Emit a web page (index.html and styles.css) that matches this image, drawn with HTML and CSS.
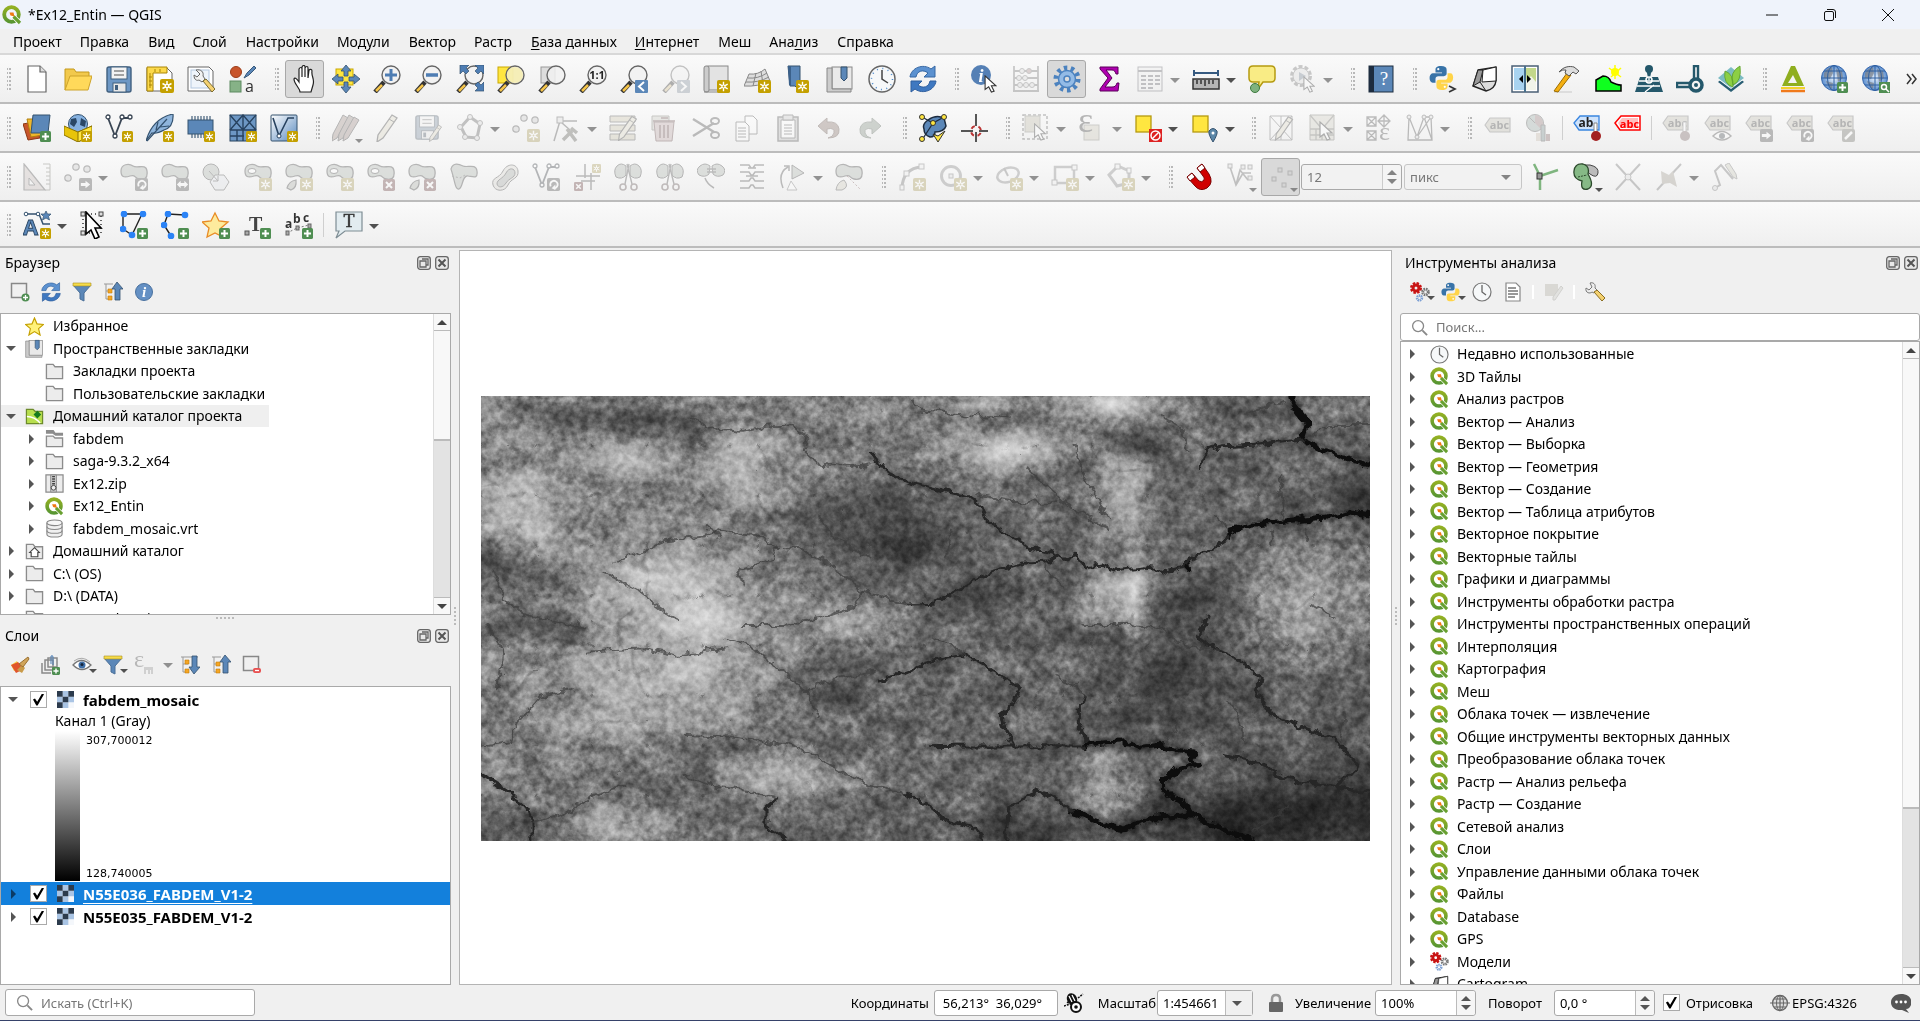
FILE: index.html
```html
<!DOCTYPE html>
<html lang="ru">
<head>
<meta charset="utf-8">
<title>*Ex12_Entin — QGIS</title>
<link rel="stylesheet" href="styles.css">
</head>
<body>
<svg class="grads" aria-hidden="true">
<defs>
<linearGradient id="gq" x1="0" y1="0" x2="0" y2="1"><stop offset="0" stop-color="#93b023"/><stop offset="1" stop-color="#589632"/></linearGradient>
<linearGradient id="gblue" x1="0" y1="0" x2="1" y2="1"><stop offset="0" stop-color="#fff"/><stop offset="1" stop-color="#5b8bbf"/></linearGradient>
<radialGradient id="gglobe"><stop offset="0" stop-color="#e8f2fc"/><stop offset="1" stop-color="#5c8fd0"/></radialGradient>
</defs>
</svg>
<svg class="defs" aria-hidden="true">
<symbol id="b-new" viewBox="0 0 14 14"><rect width="14" height="14" rx="2" fill="#c4a000"/><path d="M7 2v10M2.500 4.500l9 5M11.500 4.500l-9 5" stroke="#fff" stroke-width="1.500"/><circle cx="7" cy="7" r="2.200" fill="#fff"/><circle cx="7" cy="7" r="1" fill="#c4a000"/></symbol>
<symbol id="b-plus" viewBox="0 0 14 14"><rect width="14" height="14" rx="2" fill="#4f8e52"/><path d="M7 2.500v9M2.500 7h9" stroke="#fff" stroke-width="2.500"/></symbol>
<symbol id="b-x" viewBox="0 0 14 14"><rect width="14" height="14" rx="2" fill="#a03c3c"/><path d="M3.500 3.500l7 7M10.500 3.500l-7 7" stroke="#fff" stroke-width="2.400"/></symbol>
<symbol id="b-right" viewBox="0 0 14 14"><rect width="14" height="14" rx="2" fill="#555"/><path d="M2 5.500h5V3l5 4-5 4V8.500H2z" fill="#fff"/></symbol>
<symbol id="b-both" viewBox="0 0 14 14"><rect width="14" height="14" rx="2" fill="#555"/><path d="M1 7l4-4v2.500h4V3l4 4-4 4V8.500H5V11z" fill="#fff"/></symbol>
<symbol id="b-rot" viewBox="0 0 14 14"><rect width="14" height="14" rx="2" fill="#555"/><path d="M4 9a4 4 0 1 1 4 2" fill="none" stroke="#fff" stroke-width="2"/><path d="M9 7v6l-4-2z" fill="#fff"/></symbol>
<symbol id="cur" viewBox="0 0 14 20"><path d="M1 1v15l4-3 3 6 3-1-3-6h5z" fill="#fff" stroke="#333" stroke-width="1.200"/></symbol>
<symbol id="q" viewBox="0 0 20 20"><circle cx="9.500" cy="9.500" r="7.300" fill="none" stroke="url(#gq)" stroke-width="3.800"/><path d="M9.500 9.500l7.500 7.500" stroke="#fff" stroke-width="4.600"/><path d="M11.500 11.500l6.500 6.500" stroke="#68a030" stroke-width="3.200"/><path d="M7.500 7.500h4l1 4-4-1z" fill="#ee7913"/></symbol>

<symbol id="new" viewBox="0 0 28 28"><path d="M5 1h12l6 6v20H5z" fill="#fff" stroke="#666" stroke-width="1.200"/><path d="M17 1v6h6" fill="#ddd" stroke="#666" stroke-width="1.200"/></symbol>
<symbol id="open" viewBox="0 0 28 28"><path d="M1 25V4h9l2 3h13v5" fill="#f2c94c" stroke="#c49a1d"/><path d="M1 25l5-14h22l-4 14z" fill="#ffd95a" stroke="#cda32a"/></symbol>
<symbol id="save" viewBox="0 0 28 28"><rect x="2" y="2" width="24" height="25" rx="2" fill="#6d97c4" stroke="#41607f" stroke-width="1.400"/><rect x="6" y="2" width="16" height="12" fill="#f3f3f3" stroke="#41607f"/><path d="M9 6h10M9 10h10" stroke="#888" stroke-width="1.300"/><rect x="8" y="18" width="13" height="9" fill="#e8e8e8" stroke="#41607f"/><rect x="10" y="20" width="3" height="5" fill="#41607f"/></symbol>
<symbol id="layout" viewBox="0 0 28 28"><path d="M1 3h20l5 5v18H1z" fill="#fff" stroke="#666"/><path d="M1 2h20v6H7v18H1z" fill="#fcd94b" stroke="#a98506"/><path d="M4 8v15M9 4v3M14 4v3M3 12h3M3 16h3M3 20h3" stroke="#a98506"/><use href="#b-new" x="14" y="14" width="14" height="14"/></symbol>
<symbol id="layman" viewBox="0 0 28 28"><path d="M1 2h21l4 4v20H1z" fill="#fff" stroke="#666"/><rect x="4" y="5" width="18" height="18" fill="#eef4fb" stroke="#b4c8e0"/><path d="M9 5l4 4-3 3-3-2c0 5 3 6 5 5l3 2 3-3-2-3c1-4-2-7-7-6z" fill="#f2f2f2" stroke="#666"/><path d="M16 16l9 11 3-3-9-10z" fill="#f4d170" stroke="#7a6a30"/></symbol>
<symbol id="style" viewBox="0 0 28 28"><circle cx="7" cy="7" r="5.500" fill="#c8552b" stroke="#9c3c18"/><path d="M15 13l3-5 7-7 2 2-7 7z" fill="#5b87b8" stroke="#38587a"/><rect x="1" y="16" width="11" height="11" fill="#86b287" stroke="#5d8a60"/><text x="16" y="27" font-size="16" fill="#333" font-family="Open Sans">a</text></symbol>
<symbol id="hand" viewBox="0 0 28 28"><path d="M9 27c0-4-6-8-6-13 1-2 3 0 5 3V4c1-2 3-2 3 0v8V2c1-2 3-2 3 0v10V3c1-2 3-2 3 0v10l1-8c1-1 3-1 3 1-1 5 3 8 1 14l-2 7z" fill="#fff" stroke="#222" stroke-width="1.200"/></symbol>
<symbol id="pansel" viewBox="0 0 28 28"><rect x="4" y="4" width="17" height="16" fill="#ffe640" stroke="#c9a800"/><path d="M14 0l5 6h-3v5h-4V6H9zM14 28l5-6h-3v-5h-4v5H9zM0 14l6-5v3h5v4H6v3zM28 14l-6-5v3h-5v4h5v3z" fill="#5b87b8" stroke="#34526f" stroke-width=".8"/></symbol>
<symbol id="mag" viewBox="0 0 28 28"><path d="M11 17L2 27" stroke="#333" stroke-width="4.500"/><path d="M9 20l-6 6" stroke="#f4c44a" stroke-width="2.500"/><circle cx="18" cy="10" r="9" fill="#f1f1f1" fill-opacity=".85" stroke="#666" stroke-width="1.400"/></symbol>
<symbol id="zin" viewBox="0 0 28 28"><use href="#mag"/><path d="M18 4v12M12 10h12" stroke="#4e7db3" stroke-width="3"/></symbol>
<symbol id="zout" viewBox="0 0 28 28"><use href="#mag"/><path d="M12 10h12" stroke="#4e7db3" stroke-width="3.500"/></symbol>
<symbol id="zfull" viewBox="0 0 28 28"><use href="#mag"/><path d="M4 0h9l-3 3 3 3-3 3-3-3-3 3zM28 0v9l-3-3-3 3-3-3 3-3-3-3zM28 26h-9l3-3-3-3 3-3 3 3 3-3z" fill="#4e7db3" stroke="#34526f" stroke-width=".7"/></symbol>
<symbol id="zsel" viewBox="0 0 28 28"><rect x="1" y="2" width="15" height="16" fill="#ffe640" stroke="#c9a800"/><use href="#mag"/><circle cx="18" cy="10" r="8" fill="#f6eda0" fill-opacity=".7"/></symbol>
<symbol id="zlay" viewBox="0 0 28 28"><rect x="3" y="2" width="14" height="16" fill="#ddd" stroke="#999"/><use href="#mag"/></symbol>
<symbol id="z11" viewBox="0 0 28 28"><use href="#mag"/><text x="18" y="14" text-anchor="middle" font-size="11" font-weight="700" fill="#222" font-family="Open Sans">1:1</text></symbol>
<symbol id="zlast" viewBox="0 0 28 28"><use href="#mag"/><rect x="15" y="15" width="13" height="13" rx="1" fill="#5b87b8"/><path d="M24 17l-5 4.500 5 4.500" fill="none" stroke="#fff" stroke-width="2"/></symbol>
<symbol id="znext" viewBox="0 0 28 28"><use href="#mag"/><rect x="15" y="15" width="13" height="13" rx="1" fill="#7b98b8"/><path d="M19 17l5 4.500-5 4.500" fill="none" stroke="#fff" stroke-width="2"/></symbol>
<symbol id="mapv" viewBox="0 0 28 28"><rect x="5" y="1" width="20" height="24" fill="#e3e3e3" stroke="#888"/><rect x="1" y="1" width="5" height="26" rx="2" fill="#ccc" stroke="#888"/><path d="M1 27h20v-3" fill="none" stroke="#888"/><use href="#b-new" x="14" y="15" width="13" height="13"/></symbol>
<symbol id="map3d" viewBox="0 0 28 28"><path d="M5 9q9 1 16-5l5 12q-12 6-26 5z" fill="#ddd" stroke="#888"/><path d="M4 13q10 1 19-5M2 17q12 1 23-5M12 8l-3 13M17 6l2 13" fill="none" stroke="#888"/><use href="#b-new" x="14" y="15" width="13" height="13"/></symbol>
<symbol id="bmk" viewBox="0 0 28 28"><path d="M3 1h12v25l-5-5H5z" fill="#5b87b8" stroke="#34526f"/><path d="M3 1h3v19H4z" fill="#3b618b"/><use href="#b-new" x="11" y="15" width="13" height="13"/></symbol>
<symbol id="bmks" viewBox="0 0 28 28"><rect x="6" y="2" width="20" height="22" fill="#e9e9e9" stroke="#888"/><path d="M1 3h5v21h19v3H1z" fill="#ccc" stroke="#888"/><path d="M15 2h6v11l-3 3-3-3z" fill="#5b87b8" stroke="#34526f"/></symbol>
<symbol id="clock" viewBox="0 0 28 28"><circle cx="14" cy="14" r="13" fill="#f6f8f9" stroke="#666" stroke-width="1.500"/><circle cx="14" cy="14" r="10.500" fill="none" stroke="#4b89cc" stroke-width="1.500" stroke-dasharray="1 4.500"/><path d="M14 5v9l6 4" fill="none" stroke="#444" stroke-width="1.500"/></symbol>
<symbol id="refresh" viewBox="0 0 28 28"><path d="M1 12C2 3 14-2 22 4l4-3v11H15l4-4C14 4 8 6 7 12z" fill="#5b91d0" stroke="#3667a3"/><path d="M27 16c-1 9-13 14-21 8l-4 3V16h11l-4 4c5 4 11 2 12-4z" fill="#3f78c0" stroke="#2f5f9e"/></symbol>
<symbol id="ident" viewBox="0 0 28 28"><circle cx="10" cy="10" r="10" fill="#5580b5"/><text x="10" y="17" text-anchor="middle" font-size="18" font-style="italic" font-weight="700" fill="#fff" font-family="Liberation Serif">i</text><use href="#cur" x="13" y="10" width="13" height="18"/></symbol>
<symbol id="abacus" viewBox="0 0 28 28"><path d="M2 1v25M26 1v25M2 6h24M2 13h24M2 20h24M1 26h26" stroke="#777" stroke-width="1.800"/><g fill="#ddd" stroke="#777"><circle cx="10" cy="6" r="2.500"/><circle cx="17" cy="6" r="2.500" fill="#c88"/><circle cx="7" cy="13" r="2.500"/><circle cx="13" cy="13" r="2.500"/><circle cx="8" cy="20" r="2.500"/><circle cx="14" cy="20" r="2.500"/><circle cx="20" cy="20" r="2.500"/></g></symbol>
<symbol id="gear" viewBox="0 0 28 28"><circle cx="14" cy="14" r="11" fill="none" stroke="#4b82bf" stroke-width="5" stroke-dasharray="3.400 3.512"/><circle cx="14" cy="14" r="8.500" fill="#93bbe6" stroke="#4b82bf" stroke-width="1.500"/><circle cx="14" cy="14" r="3" fill="#ddd" stroke="#4b82bf" stroke-width="1.500"/></symbol>
<symbol id="sigma" viewBox="0 0 28 28"><path d="M5 2h18v7h-2c-1-3-2-4-4-4h-6l6 8-7 9h7c3 0 4-1 5-4h2l-1 8H5v-2l8-11-8-9z" fill="#b000b0" stroke="#5a005a"/></symbol>
<symbol id="table" viewBox="0 0 28 28"><rect x="2" y="2" width="24" height="24" fill="#eee" stroke="#667"/><path d="M2 6h24M5 11h5M12 11h5M19 11h5M5 15h5M12 15h5M19 15h5M5 19h5M12 19h5M19 19h5M5 23h5M12 23h5" stroke="#667" stroke-width="1.800"/></symbol>
<symbol id="ruler" viewBox="0 0 28 28"><path d="M2 8h24M2 5v6M26 5v6" stroke="#365a80" stroke-width="2"/><rect x="1" y="14" width="26" height="10" fill="#b5b5b5" stroke="#333" stroke-width="1.500"/><path d="M5 15v4M9 15v4M13 15v6M17 15v4M21 15v4" stroke="#333" stroke-width="1.500"/></symbol>
<symbol id="tip" viewBox="0 0 28 28"><path d="M5 1h18q4 0 4 4v8q0 4-4 4h-8l-5 7 1-7H5q-4 0-4-4V5q0-4 4-4z" fill="#f9ec85" stroke="#b59a10" stroke-width="1.500"/><circle cx="7" cy="23" r="4.500" fill="#7fb27f" stroke="#3d7a3f"/></symbol>
<symbol id="action" viewBox="0 0 28 28"><circle cx="12" cy="11" r="9.500" fill="none" stroke="#777" stroke-width="3" stroke-dasharray="4 2"/><circle cx="12" cy="11" r="8" fill="#ddd" stroke="#777"/><path d="M10 7l7 4-7 5z" fill="#68a"/><use href="#cur" x="14" y="11" width="12" height="17"/></symbol>
<symbol id="book" viewBox="0 0 28 28"><rect x="2" y="1" width="24" height="26" fill="#5b87b8" stroke="#1d2c3f"/><rect x="2" y="1" width="5" height="26" fill="#1d2c3f"/><text x="17" y="20" text-anchor="middle" font-size="19" fill="#fff" font-family="Liberation Serif">?</text></symbol>
<symbol id="python" viewBox="0 0 28 28"><path d="M13 1c-5 0-6 2-6 4v3h7v1H4c-5 1-4 10 0 10h3v-4q0-3 3-3h6q3 0 3-3V5q0-4-6-4z" fill="#3873a8"/><circle cx="10" cy="4.500" r="1.200" fill="#fff"/><path d="M14 27c5 0 6-2 6-4v-3h-7v-1h10c4-1 4-10 0-10h-3v3q0 4-3 4h-6q-3 0-3 3v4q0 4 6 4z" fill="#ffd448"/><circle cx="17" cy="23.500" r="1.200" fill="#fff"/></symbol>
<symbol id="pycon" viewBox="0 0 28 28"><use href="#python" width="26" height="26"/><path d="M20 21l6 3-6 3" fill="none" stroke="#333" stroke-width="1.700"/></symbol>
<symbol id="carto" viewBox="0 0 28 28"><path d="M8 5l18-3v14q-1 8-10 10L3 21z" fill="#ddd" stroke="#222" stroke-width="1.400"/><path d="M8 5L3 21l7-4L13 5z" fill="#999" stroke="#222"/><path d="M13 5l13-3v14l-14 1z" fill="#fff" stroke="#222"/><path d="M10 17l6 9" stroke="#222"/></symbol>
<symbol id="swipe" viewBox="0 0 28 28"><rect x="1" y="1" width="26" height="26" fill="#fff" stroke="#4a5f75" stroke-width="1.500"/><path d="M3 3h11v22H3z" fill="#a8d3f0"/><path d="M14 3h11v22H14z" fill="#c3d88b"/><path d="M14 17l6-6 5 6v8H14z" fill="#f1f4ea"/><path d="M14 1v26" stroke="#47708d" stroke-width="2"/><path d="M8 14l4-4v8zM20 14l-4-4v8z"/></symbol>
<symbol id="hammer" viewBox="0 0 28 28"><path d="M2 27h18" stroke="#ddd" stroke-width="2"/><path d="M15 8l4 2-13 17-4-1z" fill="#f5b012" stroke="#9a6b00"/><path d="M7 7c5-6 11-6 15-5l5 4-3 3-3-2-4 4-4-3 1-3q-3-1-7 2z" fill="#ddd" stroke="#555"/></symbol>
<symbol id="hill" viewBox="0 0 28 28"><path d="M2 26V15l7-4q6 0 8 6 6 3 10 3v6z" fill="#0fff1f" stroke="#000" stroke-width="1.500"/><path d="M21 0v14M15 3l12 9M27 3l-10 9" stroke="#ff0" stroke-width="1.500"/><circle cx="21" cy="7" r="4" fill="#ff0"/></symbol>
<symbol id="geo" viewBox="0 0 28 28"><path d="M5 12h18l5 15H0z" fill="#24586b"/><circle cx="14" cy="4" r="4" fill="#24586b"/><path d="M14 6v9M4 16h20M2 21h23M10 27l9-7" stroke="#fff" stroke-width="1.300"/><path d="M11 3h6l-2 10h-2z" fill="#24586b"/><circle cx="14" cy="15" r="3" fill="none" stroke="#fff" stroke-width="1.500"/></symbol>
<symbol id="loc" viewBox="0 0 28 28"><circle cx="20" cy="20" r="6" fill="none" stroke="#24586b" stroke-width="3.500"/><circle cx="20" cy="20" r="2" fill="#24586b"/><path d="M18 14V1h4v13M13 18H1v4h12" fill="none" stroke="#24586b" stroke-width="2.400"/></symbol>
<symbol id="leaf" viewBox="0 0 28 28"><path d="M1 17l13 10 13-10-6-5H7z" fill="#285d73"/><path d="M2 15l12 9 12-9-4-5H6z" fill="#fff"/><path d="M1 13L14 2l13 11-13 10z" fill="#7dbcc3"/><path d="M8 6q9 3 8 16Q6 19 8 6zM23 1q2 15-7 19Q12 7 23 1z" fill="#8ccf45" stroke="#5d9e2c" stroke-width=".8"/></symbol>
<symbol id="tri" viewBox="0 0 28 28"><path d="M12 1h4l9 20H3zM14 10l-5 8h9z" fill="#8fae1f" fill-rule="evenodd"/><path d="M2 23h24" stroke="#f3d22b" stroke-width="2"/><path d="M2 26h24" stroke="#f07a1c" stroke-width="2.500"/></symbol>
<symbol id="globe" viewBox="0 0 28 28"><circle cx="13" cy="13" r="12.500" fill="url(#gglobe)" stroke="#3767ab"/><path d="M3 8q3-5 8-6l1 6-3 6-6-1zM15 4l6 2 1 7-5 4zM5 16l7 2-1 6q-5-3-6-8z" fill="#777" fill-opacity=".6"/><path d="M1 13h24M3 6h20M3 20h20M13 0v26" stroke="#3060a0" fill="none"/><ellipse cx="13" cy="13" rx="6.500" ry="12.500" fill="none" stroke="#3060a0"/></symbol>
<symbol id="globeadd" viewBox="0 0 28 28"><use href="#globe"/><use href="#b-plus" x="16" y="17" width="11" height="11"/></symbol>
<symbol id="globeq" viewBox="0 0 28 28"><use href="#globe"/><rect x="17" y="17" width="11" height="11" fill="#4f8e52"/><circle cx="22" cy="22" r="2.500" fill="none" stroke="#fff" stroke-width="1.500"/><path d="M24 24l3 3" stroke="#fff" stroke-width="1.500"/></symbol>

<symbol id="dsm" viewBox="0 0 28 28"><path d="M0 10l10-2 7 16-12 2z" fill="#c8552b" stroke="#8a3714"/><path d="M4 5h12l4 16-12 2z" fill="#f0b72b" stroke="#b08010"/><path d="M10 1h17l-2 18H8z" fill="#5b87b8" stroke="#34526f"/><use href="#b-plus" x="17" y="17" width="11" height="11"/></symbol>
<symbol id="geopkg" viewBox="0 0 28 28"><circle cx="14" cy="10" r="9.500" fill="#86b1e0" stroke="#34526f"/><path d="M7 5l5-1 1 4-3 5-4-3zM17 4l5 3-1 6-5-2z" fill="#2a4766"/><path d="M0 12l14 6 14-6v9l-14 7-14-7z" fill="#e8c40a" stroke="#8a7200"/><path d="M14 18v10l14-7v-9z" fill="#ffe640" stroke="#8a7200"/><use href="#b-new" x="17" y="17" width="11" height="11"/></symbol>
<symbol id="vec" viewBox="0 0 28 28"><path d="M3 4l7 18 7-18h7" fill="none" stroke="#3a4654" stroke-width="1.800"/><g fill="#fff" stroke="#3a4654" stroke-width="1.300"><circle cx="3" cy="3" r="2"/><circle cx="10" cy="22" r="2"/><circle cx="17" cy="3" r="2"/><circle cx="25" cy="3" r="2"/></g></symbol>
<symbol id="newvec" viewBox="0 0 28 28"><use href="#vec"/><use href="#b-new" x="17" y="17" width="11" height="11"/></symbol>
<symbol id="feather" viewBox="0 0 28 28"><path d="M0 27C4 13 13 3 27 0q1 13-9 16Q11 20 6 19z" fill="#8fb5dc" stroke="#34526f" stroke-width="1.200"/><path d="M1 27L21 5M10 16l2-8M14 13l9-1" stroke="#34526f" stroke-width="1.200" fill="none"/><use href="#b-new" x="17" y="17" width="11" height="11"/></symbol>
<symbol id="chip" viewBox="0 0 28 28"><path d="M5 2v22M8 2v22M11 2v22M14 2v22M17 2v22M20 2v22M23 2v22" stroke="#34526f" stroke-width="1.100"/><rect x="1" y="6" width="25" height="14" fill="#5b87b8" stroke="#34526f"/><use href="#b-new" x="17" y="17" width="11" height="11"/></symbol>
<symbol id="mesh" viewBox="0 0 28 28"><rect x="1" y="1" width="26" height="26" fill="#6d97c4" stroke="#27425f"/><path d="M1 16h26M1 1l13 15L27 1M1 16L14 1l13 15M14 1v26M1 22h14M8 16v11" fill="none" stroke="#27425f" stroke-width="1.400"/><use href="#b-new" x="17" y="17" width="11" height="11"/></symbol>
<symbol id="vmesh" viewBox="0 0 28 28"><rect x="1" y="1" width="26" height="26" rx="1" fill="url(#gblue)" stroke="#34526f"/><path d="M3 4l6 18 9-18h6" fill="none" stroke="#27425f" stroke-width="1.600"/><circle cx="9" cy="22" r="2" fill="#fff" stroke="#27425f"/><use href="#b-new" x="17" y="17" width="11" height="11"/></symbol>
<symbol id="pencil" viewBox="0 0 28 28"><path d="M19 1l5 3-14 20-6 4 1-7z" fill="#e5dcae" stroke="#444" stroke-width="1.300"/><path d="M16 5l5 3" stroke="#444"/></symbol>
<symbol id="pencils" viewBox="0 0 28 28"><path d="M11 1l5 3L5 24l-5 3 1-7z" fill="#b99080" stroke="#444"/><path d="M17 1l5 3-11 20-5 3 1-7z" fill="#a98c80" stroke="#444"/><path d="M22 3l5 3-11 18-5 3 1-6z" fill="#ba8a80" stroke="#444"/></symbol>
<symbol id="savee" viewBox="0 0 28 28"><use href="#save" width="26" height="26"/><use href="#pencil" x="13" y="10" width="17" height="18"/></symbol>
<symbol id="poly" viewBox="0 0 28 28"><path d="M14 3l10 7-3 14-11-1-5-10z" fill="none" stroke="#666" stroke-width="3"/><g fill="#ddd" stroke="#666"><circle cx="14" cy="3" r="2.500"/><circle cx="24" cy="9" r="2.500"/><circle cx="21" cy="24" r="2.500"/><circle cx="9" cy="23" r="2.500"/><circle cx="4" cy="13" r="2.500"/></g></symbol>
<symbol id="pts" viewBox="0 0 28 28"><g fill="#ccc" stroke="#555" stroke-width="1.200"><circle cx="4" cy="15" r="3.200"/><circle cx="12" cy="4" r="3.200"/><circle cx="23" cy="6" r="3.200"/></g></symbol>
<symbol id="ptsnew" viewBox="0 0 28 28"><use href="#pts"/><use href="#b-new" x="15" y="15" width="13" height="13"/></symbol>
<symbol id="ptsmv" viewBox="0 0 28 28"><use href="#pts"/><use href="#b-right" x="15" y="15" width="13" height="13"/></symbol>
<symbol id="vertex" viewBox="0 0 28 28"><path d="M1 27L7 7h17M9 9l8 7" fill="none" stroke="#555" stroke-width="1.500"/><rect x="4" y="3" width="6" height="6" fill="#ddd" stroke="#555"/><path d="M10 26l9-9M14 15l9 12M18 14l6 5" stroke="#665" stroke-width="3.500"/></symbol>
<symbol id="attrs" viewBox="0 0 28 28"><path d="M1 2h25v6H1zM1 11h25v6H1zM1 20h25v6H1z" fill="#d8c890" stroke="#555"/><use href="#pencil" x="6" y="1" width="25" height="26"/></symbol>
<symbol id="trash" viewBox="0 0 28 28"><path d="M2 2h17v14H2z" fill="#ccb" stroke="#776"/><path d="M4 8h20l-2 19H6z" fill="#d8a7a7" stroke="#844"/><path d="M3 7h22M11 4h7M10 11v13M14 11v13M18 11v13" stroke="#844" stroke-width="1.600"/></symbol>
<symbol id="cut" viewBox="0 0 28 28"><path d="M1 5l21 13M1 22L22 9" stroke="#555" stroke-width="2.500"/><ellipse cx="23" cy="21" rx="4" ry="3" fill="none" stroke="#555" stroke-width="2"/><ellipse cx="23" cy="7" rx="4" ry="3" fill="none" stroke="#555" stroke-width="2"/></symbol>
<symbol id="copy" viewBox="0 0 28 28"><path d="M12 2h8l4 4v14H12z" fill="#fff" stroke="#555"/><path d="M3 8h9l4 4v15H3z" fill="#fff" stroke="#555"/><path d="M5 14h8M5 17h8M5 20h8M5 23h8" stroke="#555"/></symbol>
<symbol id="paste" viewBox="0 0 28 28"><path d="M4 3h20v24H4z" fill="#bbb" stroke="#555" stroke-width="1.500"/><path d="M7 6h14v18H7z" fill="#fff" stroke="#555"/><path d="M9 1h10v5H9zM10 11h8M10 14h8M10 17h8M10 20h8" fill="#ccc" stroke="#555"/></symbol>
<symbol id="undo" viewBox="0 0 28 28"><path d="M12 4L3 12l9 8v-5q8-2 7 4-1 4-6 5 12 0 11-9-1-8-12-7z" fill="#a67460" stroke="#7a5040"/></symbol>
<symbol id="redo" viewBox="0 0 28 28"><path d="M16 4l9 8-9 8v-5q-8-2-7 4 1 4 6 5Q3 24 4 15q1-8 12-7z" fill="#7c9a7c" stroke="#567056"/></symbol>
<symbol id="topo" viewBox="0 0 28 28"><path d="M5 15Q3 10 9 6q8-6 16-2l2 8q-2 6-11 6 0 5-5 5-6-2-6-8z" fill="#5b87b8" stroke="#1d2c3f" stroke-width="1.500"/><path d="M3 3l11 6 11-6M14 9L3 26" fill="none" stroke="#1d2c3f" stroke-width="1.300"/><g fill="#ffe640" stroke="#333"><circle cx="3" cy="3" r="2.500"/><circle cx="25" cy="3" r="2.500"/><circle cx="14" cy="9" r="2.500"/><circle cx="3" cy="25" r="2.500"/><path d="M14 20l5 8 7-11-7 5z"/></g></symbol>
<symbol id="cross" viewBox="0 0 28 28"><path d="M16 0v12M16 18v10M1 17h12M19 17h9" stroke="#222" stroke-width="1.500"/><circle cx="16" cy="17" r="5" fill="none" stroke="#b33" stroke-width="2" stroke-dasharray="4 3.850" stroke-dashoffset="-2"/></symbol>
<symbol id="selrect" viewBox="0 0 28 28"><rect x="1" y="1" width="24" height="24" fill="none" stroke="#666" stroke-width="1.500" stroke-dasharray="3 2"/><rect x="3" y="2" width="15" height="16" fill="#c8bf96" stroke="#887"/><use href="#cur" x="11" y="9" width="14" height="18"/></symbol>
<symbol id="eps" viewBox="0 0 28 28"><rect x="6" y="11" width="15" height="15" fill="#d5cca5" stroke="#887"/><text x="0" y="18" font-size="36" fill="#444" font-family="Liberation Serif">ε</text></symbol>
<symbol id="desel" viewBox="0 0 28 28"><rect x="2" y="2" width="15" height="16" fill="#ffe640" stroke="#b59a10" stroke-width="1.300"/><rect x="15" y="15" width="13" height="13" fill="#d22"/><circle cx="21.500" cy="21.500" r="4.500" fill="none" stroke="#fff" stroke-width="1.500"/><path d="M18 25l7-7" stroke="#fff" stroke-width="1.500"/></symbol>
<symbol id="selloc" viewBox="0 0 28 28"><rect x="2" y="2" width="15" height="16" fill="#ffe640" stroke="#b59a10" stroke-width="1.300"/><path d="M22 28q-5-8-4-11 4-5 8 0 1 3-4 11z" fill="#5b87a8" stroke="#34526f"/><circle cx="22" cy="19" r="1.500" fill="#fff"/></symbol>
<symbol id="medit" viewBox="0 0 28 28"><path d="M2 2h22v24H2zM2 2l22 24M24 2L2 26M13 2v24" fill="none" stroke="#666"/><use href="#pencil" x="4" y="1" width="24" height="26"/></symbol>
<symbol id="msel" viewBox="0 0 28 28"><path d="M1 1h24v25H1z" fill="#d5d0b4" stroke="#776"/><path d="M1 15h24M7 15v11M13 15v11M1 21h24M1 1l12 14L25 1" fill="none" stroke="#776" stroke-width="1.300"/><use href="#cur" x="9" y="7" width="16" height="20"/></symbol>
<symbol id="mexp" viewBox="0 0 28 28"><path d="M2 3h9v9H2zM2 3l9 9M11 3l-9 9M2 17h9v9H2zM2 17l9 9M11 17l-9 9M19 1l6 6-6 6-6-6zM19 1v12M13 7h12" fill="none" stroke="#555" stroke-width="1.300"/><text x="14" y="26" font-size="26" fill="#555" font-family="Liberation Serif">ε</text></symbol>
<symbol id="mforce" viewBox="0 0 28 28"><path d="M2 26L3 3l8 20L18 3h7l1 23zM11 23L25 3M18 3l8 23" fill="none" stroke="#555" stroke-width="1.300"/><g fill="#ddd" stroke="#555"><circle cx="3" cy="3" r="2"/><circle cx="11" cy="23" r="2"/><circle cx="18" cy="3" r="2"/><circle cx="25" cy="3" r="2"/></g></symbol>
<symbol id="tag" viewBox="0 0 28 28"><path d="M1 11l5-7h20v14H6z" fill="#c9c2a0" stroke="#777" stroke-width="1.200"/><text x="15.500" y="15" text-anchor="middle" font-size="11" font-weight="700" fill="#444" font-family="Open Sans">abc</text></symbol>
<symbol id="diag" viewBox="0 0 28 28"><circle cx="10" cy="9" r="8.500" fill="#8bb3a5" stroke="#555"/><path d="M10 9V1A8.500 8.500 0 0 1 16 15z" fill="#b77"/><path d="M10 9L4 3" stroke="#555"/><path d="M11 19h4v8h-4z" fill="#db9"/><path d="M16 11h4v16h-4z" fill="#699" stroke="#555"/><path d="M21 20h4v7h-4z" fill="#a66"/></symbol>
<symbol id="lblpin" viewBox="0 0 28 28"><path d="M1 9l6-7h19v14H6z" fill="#cfe3fb" stroke="#3a86e0" stroke-width="1.300"/><text x="13" y="13" text-anchor="middle" font-size="12" font-weight="700" fill="#222" font-family="Open Sans">ab</text><path d="M21 9h3v10h-3z" fill="#fff" stroke="#888"/><circle cx="23" cy="22" r="5" fill="#a32020"/></symbol>
<symbol id="lblred" viewBox="0 0 28 28"><path d="M1 9l6-7h19v14H6z" fill="#fff" stroke="#f00" stroke-width="1.500"/><path d="M4 9l4-5h16v10H7z" fill="#f00" fill-opacity=".25"/><text x="15.500" y="14" text-anchor="middle" font-size="11" font-weight="700" fill="#f00" font-family="Open Sans">abc</text></symbol>
<symbol id="lblpin2" viewBox="0 0 28 28"><use href="#tag" y="-2"/><path d="M21 8h3v10h-3z" fill="#fff" stroke="#888"/><circle cx="23" cy="22" r="5" fill="#966"/></symbol>
<symbol id="lbleye" viewBox="0 0 28 28"><use href="#tag" y="-2"/><path d="M9 22q9-9 18 0-9 8-18 0z" fill="#fff" stroke="#555" stroke-width="1.500"/><circle cx="18" cy="22" r="3" fill="#456"/></symbol>
<symbol id="lblmv" viewBox="0 0 28 28"><use href="#tag" y="-2"/><use href="#b-right" x="15" y="15" width="13" height="13"/></symbol>
<symbol id="lblrot" viewBox="0 0 28 28"><use href="#tag" y="-2"/><use href="#b-rot" x="15" y="15" width="13" height="13"/></symbol>
<symbol id="lbled" viewBox="0 0 28 28"><use href="#tag" y="-2"/><rect x="15" y="15" width="13" height="13" rx="2" fill="#776"/><path d="M18 25l7-7" stroke="#fff" stroke-width="2.500"/></symbol>

<symbol id="square" viewBox="0 0 28 28"><path d="M1 1l21 26H1z" fill="#d5bcb4" stroke="#555" stroke-width="1.200"/><path d="M6 15l6 7H6z" fill="#f5f5f5" stroke="#555"/><path d="M20 1h7v26h-5M23 5h4M23 9h4M23 13h4M23 17h4M23 21h4" fill="none" stroke="#776"/></symbol>
<symbol id="blob" viewBox="0 0 28 28"><path d="M1 8c0-7 8-8 12-5s13-3 14 5-3 9-8 8-3-5-9-3-9 1-9-5z" fill="#aab8aa" stroke="#444" stroke-width="1.300"/></symbol>
<symbol id="blob2" viewBox="0 0 28 28"><use href="#blob"/><path d="M2 25q2-7 9-8 1 8-5 10z" fill="#b0b8a6" stroke="#444" stroke-width="1.200"/></symbol>
<symbol id="ring" viewBox="0 0 28 28"><use href="#blob"/><ellipse cx="8" cy="8" rx="4" ry="2.500" fill="#fff" stroke="#444"/></symbol>
<symbol id="f-rot" viewBox="0 0 28 28"><use href="#blob"/><use href="#b-rot" x="15" y="15" width="13" height="13"/></symbol>
<symbol id="f-scale" viewBox="0 0 28 28"><use href="#blob"/><use href="#b-both" x="15" y="15" width="13" height="13"/></symbol>
<symbol id="f-simp" viewBox="0 0 28 28"><circle cx="9" cy="9" r="8" fill="#aab8aa" stroke="#444"/><path d="M13 12h9l5 7-5 8h-9l-5-8z" fill="#dde6f0" stroke="#555"/><path d="M7 8l9 10M16 13v5h-5" fill="none" stroke="#555"/></symbol>
<symbol id="f-ring" viewBox="0 0 28 28"><use href="#ring"/><use href="#b-new" x="15" y="15" width="13" height="13"/></symbol>
<symbol id="f-part" viewBox="0 0 28 28"><use href="#blob2"/><use href="#b-new" x="15" y="15" width="13" height="13"/></symbol>
<symbol id="f-delring" viewBox="0 0 28 28"><use href="#ring"/><use href="#b-x" x="16" y="16" width="12" height="12"/></symbol>
<symbol id="f-delpart" viewBox="0 0 28 28"><use href="#blob2"/><use href="#b-x" x="16" y="16" width="12" height="12"/></symbol>
<symbol id="f-resh" viewBox="0 0 28 28"><path d="M1 6c2-7 8-5 12-3s13-3 14 5-3 6-9 5-5 12-9 13-4-8-8-20z" fill="#aab8aa" stroke="#444" stroke-width="1.200"/><path d="M2 13l8 2 5-3" fill="none" stroke="#555" stroke-dasharray="2 2"/></symbol>
<symbol id="f-off" viewBox="0 0 28 28"><path d="M2 22C0 14 8 16 12 8s14-8 15 0-7 7-10 14-13 7-15 0z" fill="#ddd8c8" stroke="#444"/><path d="M6 21c0-5 6-5 9-11s9-5 9 0-6 5-9 10-8 5-9 1z" fill="#a5b0a5" stroke="#444"/></symbol>
<symbol id="f-vec" viewBox="0 0 28 28"><use href="#vec"/><use href="#b-rot" x="15" y="15" width="13" height="13"/></symbol>
<symbol id="f-trim" viewBox="0 0 28 28"><path d="M12 1v14M18 10v17M3 13h24M8 18h14" stroke="#555" stroke-width="1.500"/><use href="#b-new" x="19" y="1" width="9" height="9"/><use href="#b-x" x="1" y="19" width="9" height="9"/></symbol>
<symbol id="f-split" viewBox="0 0 28 28"><path d="M12 3q-5-4-9 0t-1 11q6 3 10-2zM16 3q5-4 9 0t1 11q-6 3-10-2z" fill="#aab8aa" stroke="#444"/><path d="M15 1l-4 20M13 1l5 20" stroke="#555" stroke-width="1.400"/><circle cx="9" cy="24" r="3" fill="none" stroke="#755" stroke-width="1.600"/><circle cx="20" cy="24" r="3" fill="none" stroke="#755" stroke-width="1.600"/></symbol>
<symbol id="f-merge" viewBox="0 0 28 28"><path d="M13 3q-5-4-10 0t-1 9q6 3 10-1zM15 3q5-4 10 0t1 9q-6 3-10-1z" fill="#aab8aa" stroke="#444"/><path d="M10 6h9M10 9h9M8 15q2 6 9 10" fill="none" stroke="#555" stroke-width="1.500"/></symbol>
<symbol id="f-attr" viewBox="0 0 28 28"><path d="M2 2h9l2 3h2l2-3h9M2 9h9l2 3h2l2-3h9M2 18h9l2-3h2l2 3h9M2 25h9l2-3h2l2 3h9M10 5h8M8 13h12" fill="none" stroke="#555" stroke-width="1.500"/></symbol>
<symbol id="f-rotp" viewBox="0 0 28 28"><path d="M4 25Q-2 10 9 4M5 3h5v5" fill="none" stroke="#555" stroke-width="1.500"/><path d="M13 2l12 8-12 6z" fill="#aab8aa" stroke="#444"/><path d="M12 18l6 9H8z" fill="#fff" stroke="#777"/></symbol>
<symbol id="f-last" viewBox="0 0 28 28"><use href="#blob"/><path d="M1 27q1-8 8-10 6 7-2 10z" fill="#d8d0b0" stroke="#555"/><path d="M12 13l14 14" stroke="#a55" stroke-dasharray="2 2"/></symbol>
<symbol id="s-arc" viewBox="0 0 28 28"><path d="M4 25Q5 5 24 4" fill="none" stroke="#777" stroke-width="3"/><g fill="#eee" stroke="#777"><rect x="2" y="22" width="4" height="5"/><rect x="6" y="8" width="5" height="5"/><rect x="21" y="1" width="5" height="5"/></g><use href="#b-new" x="15" y="15" width="13" height="13"/></symbol>
<symbol id="s-circ" viewBox="0 0 28 28"><circle cx="12" cy="13" r="9.500" fill="none" stroke="#888" stroke-width="3"/><rect x="10" y="11" width="4" height="4" fill="#ddd" stroke="#777"/><use href="#b-new" x="15" y="15" width="13" height="13"/></symbol>
<symbol id="s-ell" viewBox="0 0 28 28"><ellipse cx="13" cy="12" rx="11" ry="7" fill="none" stroke="#888" stroke-width="2.500" transform="rotate(-18 13 12)"/><path d="M9 5l4 8" stroke="#777" stroke-width="2"/><use href="#b-new" x="15" y="15" width="13" height="13"/></symbol>
<symbol id="s-rect" viewBox="0 0 28 28"><rect x="4" y="4" width="19" height="16" fill="none" stroke="#888" stroke-width="2.500"/><g fill="#eee" stroke="#777"><rect x="1" y="17" width="5" height="5"/><rect x="21" y="2" width="5" height="5"/></g><use href="#b-new" x="15" y="15" width="13" height="13"/></symbol>
<symbol id="s-poly" viewBox="0 0 28 28"><path d="M11 3l11 5v12l-12 3-8-11z" fill="none" stroke="#888" stroke-width="3"/><g fill="#eee" stroke="#777"><rect x="8" y="1" width="5" height="5"/><rect x="20" y="5" width="4" height="5"/></g><use href="#b-new" x="15" y="15" width="13" height="13"/></symbol>
<symbol id="magnet" viewBox="0 0 28 28"><path d="M2 14l5-4 7 8q3 2 5-1 1-2-1-4l-6-8 5-4 7 10q5 9-2 14-7 4-12-2z" fill="#d00000" stroke="#7a0000"/><path d="M2 14l5-4 3 4-5 4zM12 5l5-4 3 4-5 4z" fill="#fff" stroke="#700"/></symbol>
<symbol id="snapv" viewBox="0 0 28 28"><path d="M4 4l6 18 7-12h8M10 22l4-15 8 10" fill="none" stroke="#666" stroke-width="1.700"/><g fill="#ddd" stroke="#666"><rect x="2" y="1" width="4" height="4"/><rect x="15" y="2" width="4" height="4"/><rect x="22" y="2" width="4" height="4"/><rect x="22" y="13" width="4" height="4"/></g></symbol>
<symbol id="dots" viewBox="0 0 28 28"><g fill="#ccc" stroke="#777"><rect x="11" y="5" width="4" height="4"/><rect x="21" y="8" width="4" height="4"/><rect x="5" y="14" width="4" height="4"/><rect x="15" y="20" width="4" height="4"/></g></symbol>
<symbol id="topoed" viewBox="0 0 28 28"><path d="M3 1l6 12v14M9 13l18-6" fill="none" stroke="#7fb57f" stroke-width="2.500"/><rect x="6" y="10" width="5" height="6" fill="#999" stroke="#333"/></symbol>
<symbol id="overlap" viewBox="0 0 28 28"><path d="M6 2h12q9 2 8 8t-8 1z" fill="#bbb" stroke="#444"/><path d="M2 8q1-8 9-7 7 2 5 10 7 12 0 15-8 2-6-8-9-2-8-10z" fill="#86b986" stroke="#2c4a2c" stroke-width="1.300"/><path d="M6 14l9-2" stroke="#2c4a2c" stroke-dasharray="2 1"/></symbol>
<symbol id="xsnap" viewBox="0 0 28 28"><path d="M2 1l24 26M26 1L2 27" stroke="#777" stroke-width="2"/><circle cx="14" cy="14" r="3" fill="#ddd" stroke="#777"/></symbol>
<symbol id="tracex" viewBox="0 0 28 28"><path d="M26 1L2 27" stroke="#777" stroke-width="2"/><path d="M6 8l8 4 4-4 4 16-7-4-8 1z" fill="#aa9d80"/></symbol>
<symbol id="selftr" viewBox="0 0 28 28"><path d="M4 25l5-3L4 8l6-6 12 14" fill="none" stroke="#777" stroke-width="2"/><circle cx="4" cy="25" r="2.500" fill="#ddd" stroke="#777"/><path d="M14 2l8 12 4 2-1-5-7-11z" fill="#cca" stroke="#777"/></symbol>

<symbol id="a-new" viewBox="0 0 28 28"><path d="M2 3h14l4 10h7" fill="none" stroke="#34526f" stroke-width="1.500"/><g fill="#fff" stroke="#34526f"><circle cx="3" cy="3" r="1.800"/><circle cx="15" cy="3" r="1.800"/></g><text x="0" y="24" font-size="22" font-weight="700" fill="#5b87b8" stroke="#27425f" stroke-width=".8" font-family="Open Sans">A</text><path d="M23 0l1.500 3H28l-2.500 2.500 1 3.500-3.500-2-3.500 2 1-3.500L18 3h3.500z" fill="#5b87b8" stroke="#34526f" stroke-width=".7"/><use href="#b-new" x="17" y="17" width="11" height="11"/></symbol>
<symbol id="a-sel" viewBox="0 0 28 28"><rect x="4" y="3" width="18" height="19" fill="none" stroke="#333" stroke-width="1.500" stroke-dasharray="1 3"/><g fill="#ddd" stroke="#444"><rect x="2" y="1" width="4" height="4"/><rect x="20" y="1" width="4" height="4"/><rect x="2" y="20" width="4" height="4"/></g><path d="M7 1v22l5-4 4 9 4-2-4-9h6z" fill="#fff" stroke="#000" stroke-width="1.600"/></symbol>
<symbol id="a-poly" viewBox="0 0 28 28"><path d="M3 3h19L12 24l-9-6z" fill="none" stroke="#222" stroke-width="1.400"/><g fill="#2b83f6"><circle cx="4" cy="3" r="3.300"/><circle cx="23" cy="3" r="3.300"/><circle cx="3" cy="18" r="3.300"/><circle cx="12" cy="24" r="3.300"/></g><use href="#b-plus" x="17" y="17" width="11" height="11"/></symbol>
<symbol id="a-line" viewBox="0 0 28 28"><path d="M24 4L7 3 3 14l7 11" fill="none" stroke="#222" stroke-width="1.400"/><g fill="#2b83f6"><circle cx="7" cy="3" r="3.300"/><circle cx="24" cy="4" r="3.300"/><circle cx="3" cy="14" r="3.300"/><circle cx="10" cy="25" r="3.300"/></g><use href="#b-plus" x="17" y="17" width="11" height="11"/></symbol>
<symbol id="a-star" viewBox="0 0 28 28"><path d="M13 2l4 8 9 1-7 6 2 9-8-4-8 4 2-9-7-6 9-1z" fill="#fdeb9d" stroke="#e88b25" stroke-width="1.300"/><use href="#b-plus" x="17" y="17" width="11" height="11"/></symbol>
<symbol id="a-text" viewBox="0 0 28 28"><text x="5" y="20" font-size="20" font-weight="700" fill="#444" font-family="Liberation Serif">T</text><rect x="1" y="20" width="4" height="4" fill="#aaa" stroke="#555"/><use href="#b-plus" x="16" y="17" width="11" height="11"/></symbol>
<symbol id="a-abc" viewBox="0 0 28 28"><g font-size="12" font-weight="700" fill="#333" font-family="Open Sans"><text x="0" y="17">a</text><text x="8" y="12">b</text><text x="18" y="11">c</text></g><path d="M2 22l10-5 12-3" stroke="#777" stroke-dasharray="2 2" fill="none"/><g fill="#aaa" stroke="#666"><rect x="1" y="20" width="3" height="4"/><rect x="11" y="15" width="3" height="4"/><rect x="23" y="13" width="3" height="4"/></g><use href="#b-plus" x="17" y="17" width="11" height="11"/></symbol>
<symbol id="a-form" viewBox="0 0 28 28"><path d="M1 1h26v19H10l-9 7 3-7H1z" fill="#e2ecf0" stroke="#7e8d94" stroke-width="1.200"/><text x="14" y="16" text-anchor="middle" font-size="18" fill="#333" stroke="#333" stroke-width=".5" font-family="Liberation Serif">T</text></symbol>

<symbol id="p-add" viewBox="0 0 20 20"><rect x="1.500" y="1.500" width="15" height="14" fill="#f0f0f0" stroke="#888" stroke-width="1.500"/><circle cx="15.500" cy="15.500" r="4" fill="#4f8e52"/><path d="M15.500 13v5M13 15.500h5" stroke="#fff" stroke-width="1.300"/></symbol>
<symbol id="p-del" viewBox="0 0 20 20"><rect x="1.500" y="1.500" width="15" height="14" fill="#f0f0f0" stroke="#888" stroke-width="1.500"/><rect x="11" y="13" width="8" height="5" rx="2" fill="#e85050"/><path d="M13 15.500h4" stroke="#fff" stroke-width="1.300"/></symbol>
<symbol id="funnel" viewBox="0 0 20 20"><path d="M1 3h18l-7 8v8l-4-2v-6z" fill="#5b87b8" stroke="#4a6f98"/><path d="M1 1h18v3H1z" fill="#f5dc4a" stroke="#a98d20" stroke-width=".6"/></symbol>
<symbol id="collapse" viewBox="0 0 20 20"><path d="M1 2h9M3 2v15h5M3 9h5" fill="none" stroke="#999"/><path d="M5 7h4v4H5zM5 14h4v4H5z" fill="#f5a623" stroke="#c27d0b" stroke-width=".6"/><path d="M14 0l6 7h-3v11h-5V7H9z" fill="#5b87b8" stroke="#34526f" stroke-width=".8"/></symbol>
<symbol id="expand" viewBox="0 0 20 20"><path d="M1 2h17M3 2v15h5M3 9h5" fill="none" stroke="#999"/><path d="M5 5h4v4H5zM5 14h4v4H5z" fill="#f5a623" stroke="#c27d0b" stroke-width=".6"/><path d="M14 19l6-7h-3V1h-5v11H9z" fill="#5b87b8" stroke="#34526f" stroke-width=".8"/></symbol>
<symbol id="info" viewBox="0 0 20 20"><circle cx="10" cy="10" r="8.500" fill="#6490c4" stroke="#49719f"/><text x="10" y="15" text-anchor="middle" font-size="15" font-style="italic" font-weight="700" fill="#fff" font-family="Liberation Serif">i</text></symbol>
<symbol id="brush" viewBox="0 0 20 20"><path d="M1 10l6-4 4 8-7 2z" fill="#f9d84a"/><path d="M1 10l5 8 8-4-6-7z" fill="#e0552b"/><path d="M7 15l5 3 3-5-3-3z" fill="#c99b4a"/><path d="M18 2l1 2-6 8-4-3z" fill="#d0a45a" stroke="#9a7030"/></symbol>
<symbol id="group" viewBox="0 0 20 20"><path d="M1 8v10h9M4 5v10h8V5zM7 3v9h9V3z" fill="none" stroke="#888" stroke-width="1.500"/><path d="M10 9V1q2-1 2 1v8" stroke="#4a7db5" fill="none"/><use href="#b-plus" x="11" y="12" width="8" height="8"/></symbol>
<symbol id="eye" viewBox="0 0 20 20"><path d="M1 10q8-9 18 0-9 9-18 0z" fill="#fff" stroke="#777" stroke-width="1.300"/><path d="M2 6q8-6 16 1" fill="none" stroke="#aaa"/><circle cx="10" cy="10" r="3.500" fill="#3f6fa8"/><circle cx="10" cy="9.500" r="1.500" fill="#14243a"/></symbol>
<symbol id="epsf" viewBox="0 0 20 20"><text x="0" y="12" font-size="24" fill="#555" font-family="Liberation Serif">ε</text><path d="M10 12h9v7h-2v-4h-1v4h-2v-4h-2v4h-2z" fill="#999"/></symbol>
<symbol id="star" viewBox="0 0 20 20"><path d="M10 1l2.600 6.200 6.900.6-5.200 4.500 1.600 6.700-5.900-3.600L4.100 19l1.600-6.700L.5 7.800l6.900-.6z" fill="#fff27a" stroke="#c4a000" stroke-width="1.200"/></symbol>
<symbol id="folder" viewBox="0 0 20 20"><path d="M1.500 2.500h7l2 2.500h8v12.500h-17z" fill="#ececec" stroke="#8c8c8c" stroke-width="1.400"/></symbol>
<symbol id="folderl" viewBox="0 0 20 20"><path d="M1 1h8l2 3h8v3h-8L8 5H1z" fill="#8c8c8c"/><path d="M1.500 7.500h7l2 2h8v9h-17z" fill="#ececec" stroke="#8c8c8c" stroke-width="1.400"/></symbol>
<symbol id="folderp" viewBox="0 0 20 20"><path d="M1.500 2.500h7l2 2h8v13h-17z" fill="#b8df4e" stroke="#6d8b2b" stroke-width="1.300"/><path d="M2 10q8 0 14 7" stroke="#fff" fill="none" stroke-width="1.500"/><path d="M13 4l4 4-4 4-4-4z" fill="#157a1e"/></symbol>
<symbol id="home" viewBox="0 0 20 20"><use href="#folder"/><path d="M10 6l5 5h-1.500v4.500h-7V11H5z" fill="#fff" stroke="#444" stroke-width="1.200"/></symbol>
<symbol id="zip" viewBox="0 0 20 20"><path d="M1 1h18v18H1z" fill="#ececec" stroke="#8c8c8c" stroke-width="1.300"/><path d="M6 1h6v18H6z" fill="#ccc" stroke="#8c8c8c"/><path d="M9 2v9" stroke="#444" stroke-width="3" stroke-dasharray="1.500 1"/><circle cx="9" cy="14.500" r="2.500" fill="#eee" stroke="#444"/></symbol>
<symbol id="db" viewBox="0 0 20 20"><path d="M2 4v12c0 4 16 4 16 0V4" fill="#f0f0f0" stroke="#888" stroke-width="1.200"/><ellipse cx="10" cy="4" rx="8" ry="3" fill="#f6f6f6" stroke="#888" stroke-width="1.200"/><path d="M2 8c0 4 16 4 16 0M2 12c0 4 16 4 16 0" fill="none" stroke="#888" stroke-width="1.200"/></symbol>
<symbol id="raster" viewBox="0 0 18 18"><path d="M0 0h18v18H0z" fill="#f4f7fb"/><path d="M6 0h6v6H6zM0 6h6v6H0zM12 6h6v6h-6zM6 12h6v6H6z" fill="#a9c4e4"/><path d="M0 0h6v6H0zM12 0h6v6h-6zM6 6h6v6H6zM0 12h6v6H0z" fill="#2c3b4d"/></symbol>
<symbol id="models" viewBox="0 0 20 20"><circle cx="6" cy="6" r="4" fill="none" stroke="#c81414" stroke-width="4" stroke-dasharray="2 1.140"/><circle cx="6" cy="6" r="3" fill="none" stroke="#c81414" stroke-width="3"/><circle cx="15.500" cy="10" r="2.800" fill="none" stroke="#777" stroke-width="3" stroke-dasharray="1.500 .7"/><circle cx="9.500" cy="16" r="2.400" fill="none" stroke="#7da0d4" stroke-width="2.600" stroke-dasharray="1.300 .6"/></symbol>
<symbol id="clocks" viewBox="0 0 20 20"><circle cx="10" cy="10" r="9" fill="#f6f8f9" stroke="#777" stroke-width="1.200"/><path d="M10 3v7l4 3" fill="none" stroke="#666" stroke-width="1.300"/></symbol>
<symbol id="doc" viewBox="0 0 20 20"><path d="M3 1h10l4 4v14H3z" fill="#fff" stroke="#888" stroke-width="1.200"/><path d="M5 6h8M5 9h10M5 12h10M5 15h7" stroke="#777" stroke-width="1.300"/></symbol>
<symbol id="inplace" viewBox="0 0 20 20"><path d="M1 2h13v12H1z" fill="#b9ae92"/><path d="M17 4l2 2-8 12H9v-3z" fill="#ccb" stroke="#998"/></symbol>
<symbol id="wrench" viewBox="0 0 20 20"><path d="M5 1l2 4-3 3-3-2c-1 5 4 6 6 4l2 1 3-3-2-2c1-4-2-6-5-5z" fill="#eee" stroke="#777"/><path d="M9 10l8 9 3-3-8-8z" fill="#f4d170" stroke="#8a6d20"/></symbol>
<symbol id="find" viewBox="0 0 18 18"><circle cx="7.500" cy="7.500" r="5.800" fill="none" stroke="#888" stroke-width="1.400"/><path d="M12 12l5 5" stroke="#888" stroke-width="2"/></symbol>
<symbol id="float" viewBox="0 0 14 14"><rect x=".7" y=".7" width="12.600" height="12.600" rx="2.500" fill="#e8e8e8" stroke="#666" stroke-width="1.300"/><path d="M5 3h6v6H9M3 5h6v6H3z" fill="none" stroke="#666" stroke-width="1.300"/></symbol>
<symbol id="close" viewBox="0 0 14 14"><rect x=".7" y=".7" width="12.600" height="12.600" rx="2.500" fill="#e8e8e8" stroke="#666" stroke-width="1.300"/><path d="M3.500 3.500l7 7M10.500 3.500l-7 7" stroke="#555" stroke-width="2"/></symbol>
<symbol id="extent" viewBox="0 0 20 20"><ellipse cx="8" cy="6" rx="5" ry="6" fill="#111" transform="rotate(-25 8 6)"/><path d="M5 3l3 6M8 2l3 6" stroke="#fff" stroke-width="1.300"/><path d="M14 5l5-4M0 13l6-2M3 9l12 7" stroke="#111" stroke-width="1.500" stroke-dasharray="2 1"/><circle cx="12" cy="14" r="5" fill="#fff" stroke="#111" stroke-width="2"/><circle cx="12" cy="14" r="1.800" fill="#111"/></symbol>
<symbol id="lock" viewBox="0 0 16 20"><path d="M4 10V6q0-4 4-4t4 4v4" fill="none" stroke="#999" stroke-width="2.500"/><rect x="1" y="9" width="14" height="10" rx="1" fill="#666"/></symbol>
<symbol id="crs" viewBox="0 0 20 20"><circle cx="10" cy="10" r="7.500" fill="#ddd" stroke="#666" stroke-width="1.300"/><ellipse cx="10" cy="10" rx="3.500" ry="7.500" fill="none" stroke="#666"/><path d="M0 10h20M4 6h12M4 14h12M10 2v16" stroke="#666" stroke-width="1.200"/></symbol>
<symbol id="bubble" viewBox="0 0 20 20"><path d="M10 1c14 0 12 15 5 15l3 4-7-3C-4 18-3 1 10 1z" fill="#555"/><g fill="#fff"><circle cx="5.500" cy="9" r="1.400"/><circle cx="10" cy="9" r="1.400"/><circle cx="14.500" cy="9" r="1.400"/></g></symbol>
</svg>

<header class="title"><svg class="i20"><use href="#q"/></svg><h1>*Ex12_Entin — QGIS</h1>
<div class="winbtns">
<button aria-label="Свернуть"><svg viewBox="0 0 14 14"><path d="M1 7h12" stroke="#111"/></svg></button>
<button aria-label="Восстановить"><svg viewBox="0 0 14 14"><rect x="1.500" y="3.500" width="9" height="9" rx="1.500" fill="none" stroke="#111"/><path d="M4 1.500h6q2.500 0 2.500 2.500v6" fill="none" stroke="#111"/></svg></button>
<button aria-label="Закрыть"><svg viewBox="0 0 14 14"><path d="M1 1l12 12M13 1L1 13" stroke="#111"/></svg></button>
</div></header>
<nav class="menu-bar">
<button>Проект</button><button>Правка</button><button>Вид</button><button>Слой</button><button>Настройки</button><button>Модули</button><button>Вектор</button><button>Растр</button><button><u>Б</u>аза данных</button><button><u>И</u>нтернет</button><button>Меш</button><button>Ана<u>л</u>из</button><button>Справка</button>
</nav>

<div class="bar"><i class="grip"></i>
<button class="tb" title="Создать"><svg><use href="#new"/></svg></button>
<button class="tb" title="Открыть"><svg><use href="#open"/></svg></button>
<button class="tb" title="Сохранить"><svg><use href="#save"/></svg></button>
<button class="tb" title="Новый макет"><svg><use href="#layout"/></svg></button>
<button class="tb" title="Макеты"><svg><use href="#layman"/></svg></button>
<button class="tb" title="Стили"><svg><use href="#style"/></svg></button>
<i class="grip"></i>
<button class="tb on" title="Прокрутка"><svg><use href="#hand"/></svg></button>
<button class="tb" title="К выделенному"><svg><use href="#pansel"/></svg></button>
<button class="tb" title="Увеличить"><svg><use href="#zin"/></svg></button>
<button class="tb" title="Уменьшить"><svg><use href="#zout"/></svg></button>
<button class="tb" title="Полный охват"><svg><use href="#zfull"/></svg></button>
<button class="tb" title="Увеличить до выделенного"><svg><use href="#zsel"/></svg></button>
<button class="tb" title="Увеличить до слоя"><svg><use href="#zlay"/></svg></button>
<button class="tb" title="Исходное разрешение"><svg><use href="#z11"/></svg></button>
<button class="tb" title="Предыдущий охват"><svg><use href="#zlast"/></svg></button>
<button class="tb" title="Следующий охват" disabled><svg><use href="#znext"/></svg></button>
<button class="tb" title="Новая карта"><svg><use href="#mapv"/></svg></button>
<button class="tb" title="Новая 3D карта"><svg><use href="#map3d"/></svg></button>
<button class="tb" title="Новая закладка"><svg><use href="#bmk"/></svg></button>
<button class="tb" title="Закладки"><svg><use href="#bmks"/></svg></button>
<button class="tb" title="Время"><svg><use href="#clock"/></svg></button>
<button class="tb" title="Обновить"><svg><use href="#refresh"/></svg></button>
<i class="grip"></i>
<button class="tb" title="Определить"><svg><use href="#ident"/></svg></button>
<button class="tb" title="Калькулятор полей" disabled><svg><use href="#abacus"/></svg></button>
<button class="tb on" title="Инструменты анализа"><svg><use href="#gear"/></svg></button>
<button class="tb" title="Статистика"><svg><use href="#sigma"/></svg></button>
<button class="tb more" title="Таблица" disabled><svg><use href="#table"/></svg></button>
<button class="tb more" title="Измерить"><svg><use href="#ruler"/></svg></button>
<button class="tb" title="Подсказки"><svg><use href="#tip"/></svg></button>
<button class="tb more" title="Действие" disabled><svg><use href="#action"/></svg></button>
<i class="grip"></i>
<button class="tb" title="Справка"><svg><use href="#book"/></svg></button>
<i class="grip"></i>
<button class="tb" title="Python"><svg><use href="#pycon"/></svg></button>
<button class="tb" title="Cartogram"><svg><use href="#carto"/></svg></button>
<button class="tb" title="Сравнение"><svg><use href="#swipe"/></svg></button>
<button class="tb" title="Сборка"><svg><use href="#hammer"/></svg></button>
<button class="tb" title="Рельеф"><svg><use href="#hill"/></svg></button>
<button class="tb" title="Геоморфология"><svg><use href="#geo"/></svg></button>
<button class="tb" title="Узлы"><svg><use href="#loc"/></svg></button>
<button class="tb" title="Растительность"><svg><use href="#leaf"/></svg></button>
<i class="grip"></i>
<button class="tb" title="Профиль"><svg><use href="#tri"/></svg></button>
<button class="tb" title="Добавить сервис"><svg><use href="#globeadd"/></svg></button>
<button class="tb" title="Найти сервис"><svg><use href="#globeq"/></svg></button>
<button class="ext" title="Ещё"><svg viewBox="0 0 12 12"><path d="M1 1l4 5-4 5M6 1l4 5-4 5" fill="none" stroke="#333" stroke-width="1.500"/></svg></button>
</div>

<div class="bar"><i class="grip"></i>
<button class="tb" title="Источники данных"><svg><use href="#dsm"/></svg></button>
<button class="tb" title="GeoPackage"><svg><use href="#geopkg"/></svg></button>
<button class="tb" title="Shapefile"><svg><use href="#newvec"/></svg></button>
<button class="tb" title="SpatiaLite"><svg><use href="#feather"/></svg></button>
<button class="tb" title="Временный слой"><svg><use href="#chip"/></svg></button>
<button class="tb" title="Слой меш"><svg><use href="#mesh"/></svg></button>
<button class="tb" title="Виртуальный слой"><svg><use href="#vmesh"/></svg></button>
<i class="grip"></i>
<button class="tb sub" title="Текущие правки" disabled><svg><use href="#pencils"/></svg></button>
<button class="tb" title="Режим правки" disabled><svg><use href="#pencil"/></svg></button>
<button class="tb" title="Сохранить правки" disabled><svg><use href="#savee"/></svg></button>
<button class="tb more" title="Оцифровка" disabled><svg><use href="#poly"/></svg></button>
<button class="tb" title="Добавить точку" disabled><svg><use href="#ptsnew"/></svg></button>
<button class="tb more" title="Вершины" disabled><svg><use href="#vertex"/></svg></button>
<button class="tb" title="Изменить атрибуты" disabled><svg><use href="#attrs"/></svg></button>
<button class="tb" title="Удалить" disabled><svg><use href="#trash"/></svg></button>
<button class="tb" title="Вырезать" disabled><svg><use href="#cut"/></svg></button>
<button class="tb" title="Копировать" disabled><svg><use href="#copy"/></svg></button>
<button class="tb" title="Вставить" disabled><svg><use href="#paste"/></svg></button>
<button class="tb" title="Отменить" disabled><svg><use href="#undo"/></svg></button>
<button class="tb" title="Вернуть" disabled><svg><use href="#redo"/></svg></button>
<i class="grip"></i>
<button class="tb" title="Топология"><svg><use href="#topo"/></svg></button>
<button class="tb" title="Координаты"><svg><use href="#cross"/></svg></button>
<i class="grip"></i>
<button class="tb more" title="Выделить" disabled><svg><use href="#selrect"/></svg></button>
<button class="tb more" title="Выделить по выражению" disabled><svg><use href="#eps"/></svg></button>
<button class="tb more" title="Снять выделение"><svg><use href="#desel"/></svg></button>
<button class="tb more" title="Выделить по положению"><svg><use href="#selloc"/></svg></button>
<i class="grip"></i>
<button class="tb" title="Правка меш" disabled><svg><use href="#medit"/></svg></button>
<button class="tb more" title="Выделить меш" disabled><svg><use href="#msel"/></svg></button>
<button class="tb" title="Преобразовать меш" disabled><svg><use href="#mexp"/></svg></button>
<button class="tb more" title="Линии меш" disabled><svg><use href="#mforce"/></svg></button>
<i class="grip"></i>
<button class="tb" title="Подписи" disabled><svg><use href="#tag"/></svg></button>
<button class="tb" title="Диаграммы" disabled><svg><use href="#diag"/></svg></button>
<i class="sep"></i>
<button class="tb" title="Закреплённые"><svg><use href="#lblpin"/></svg></button>
<button class="tb" title="Неразмещённые"><svg><use href="#lblred"/></svg></button>
<i class="sep"></i>
<button class="tb" title="Закрепить" disabled><svg><use href="#lblpin2"/></svg></button>
<button class="tb" title="Показать подпись" disabled><svg><use href="#lbleye"/></svg></button>
<button class="tb" title="Переместить подпись" disabled><svg><use href="#lblmv"/></svg></button>
<button class="tb" title="Повернуть подпись" disabled><svg><use href="#lblrot"/></svg></button>
<button class="tb" title="Изменить подпись" disabled><svg><use href="#lbled"/></svg></button>
</div>

<div class="bar"><i class="grip"></i>
<button class="tb" title="Расширенная оцифровка" disabled><svg><use href="#square"/></svg></button>
<button class="tb more" title="Переместить" disabled><svg><use href="#ptsmv"/></svg></button>
<button class="tb" title="Повернуть" disabled><svg><use href="#f-rot"/></svg></button>
<button class="tb" title="Масштабировать" disabled><svg><use href="#f-scale"/></svg></button>
<button class="tb" title="Упростить" disabled><svg><use href="#f-simp"/></svg></button>
<button class="tb" title="Добавить кольцо" disabled><svg><use href="#f-ring"/></svg></button>
<button class="tb" title="Добавить часть" disabled><svg><use href="#f-part"/></svg></button>
<button class="tb" title="Заполнить кольцо" disabled><svg><use href="#f-ring"/></svg></button>
<button class="tb" title="Удалить кольцо" disabled><svg><use href="#f-delring"/></svg></button>
<button class="tb" title="Удалить часть" disabled><svg><use href="#f-delpart"/></svg></button>
<button class="tb" title="Изменить форму" disabled><svg><use href="#f-resh"/></svg></button>
<button class="tb" title="Параллельная кривая" disabled><svg><use href="#f-off"/></svg></button>
<button class="tb" title="Обратить линию" disabled><svg><use href="#f-vec"/></svg></button>
<button class="tb" title="Обрезать" disabled><svg><use href="#f-trim"/></svg></button>
<button class="tb" title="Разбить объекты" disabled><svg><use href="#f-split"/></svg></button>
<button class="tb" title="Разбить части" disabled><svg><use href="#f-split"/></svg></button>
<button class="tb" title="Объединить" disabled><svg><use href="#f-merge"/></svg></button>
<button class="tb" title="Объединить атрибуты" disabled><svg><use href="#f-attr"/></svg></button>
<button class="tb more" title="Повернуть символы" disabled><svg><use href="#f-rotp"/></svg></button>
<button class="tb" title="Сместить" disabled><svg><use href="#f-last"/></svg></button>
<i class="grip"></i>
<button class="tb" title="Дуга" disabled><svg><use href="#s-arc"/></svg></button>
<button class="tb more" title="Круг" disabled><svg><use href="#s-circ"/></svg></button>
<button class="tb more" title="Эллипс" disabled><svg><use href="#s-ell"/></svg></button>
<button class="tb more" title="Прямоугольник" disabled><svg><use href="#s-rect"/></svg></button>
<button class="tb more" title="Многоугольник" disabled><svg><use href="#s-poly"/></svg></button>
<i class="grip"></i>
<button class="tb" title="Прилипание"><svg><use href="#magnet"/></svg></button>
<button class="tb sub" title="Слои прилипания" disabled><svg><use href="#snapv"/></svg></button>
<button class="tb sub on" title="Тип прилипания" disabled><svg><use href="#dots"/></svg></button>
<div class="spin off"><input type="text" value="12" aria-label="Порог" disabled><i class="ud"></i></div>
<div class="combo off"><select aria-label="Единицы" disabled><option>пикс</option></select></div>
<button class="tb" title="Топологическая правка"><svg><use href="#topoed"/></svg></button>
<button class="tb sub" title="Перекрытия"><svg><use href="#overlap"/></svg></button>
<button class="tb" title="Пересечения" disabled><svg><use href="#xsnap"/></svg></button>
<button class="tb more" title="Трассировка" disabled><svg><use href="#tracex"/></svg></button>
<button class="tb" title="Самоприлипание" disabled><svg><use href="#selftr"/></svg></button>
</div>

<div class="bar last"><i class="grip"></i>
<button class="tb more" title="Слой аннотаций"><svg><use href="#a-new"/></svg></button>
<button class="tb" title="Изменить аннотацию"><svg><use href="#a-sel"/></svg></button>
<button class="tb" title="Полигон"><svg><use href="#a-poly"/></svg></button>
<button class="tb" title="Линия"><svg><use href="#a-line"/></svg></button>
<button class="tb" title="Маркер"><svg><use href="#a-star"/></svg></button>
<button class="tb" title="Текст"><svg><use href="#a-text"/></svg></button>
<button class="tb" title="Текст вдоль линии"><svg><use href="#a-abc"/></svg></button>
<i class="sep"></i>
<button class="tb more" title="Текстовая аннотация"><svg><use href="#a-form"/></svg></button>
</div>

<main class="work">
<aside class="left">
<section class="dock browser">
<div class="dock-title"><h2>Браузер</h2><button aria-label="Открепить"><svg><use href="#float"/></svg></button><button aria-label="Закрыть"><svg><use href="#close"/></svg></button></div>
<div class="dock-bar">
<button title="Добавить слои"><svg><use href="#p-add"/></svg></button><button title="Обновить"><svg><use href="#refresh"/></svg></button><button title="Фильтр"><svg><use href="#funnel"/></svg></button><button title="Свернуть всё"><svg><use href="#collapse"/></svg></button><button title="Свойства"><svg><use href="#info"/></svg></button>
</div>
<div class="view">
<ul class="tree">
<li><i class="tw"></i><svg><use href="#star"/></svg>Избранное</li>
<li><i class="tw dn"></i><svg><use href="#bmks"/></svg>Пространственные закладки</li>
<li class="l2"><i class="tw"></i><svg><use href="#folder"/></svg>Закладки проекта</li>
<li class="l2"><i class="tw"></i><svg><use href="#folder"/></svg>Пользовательские закладки</li>
<li class="hl"><i class="tw dn"></i><svg><use href="#folderp"/></svg>Домашний каталог проекта</li>
<li class="l2"><i class="tw rt"></i><svg><use href="#folderl"/></svg>fabdem</li>
<li class="l2"><i class="tw rt"></i><svg><use href="#folder"/></svg>saga-9.3.2_x64</li>
<li class="l2"><i class="tw rt"></i><svg><use href="#zip"/></svg>Ex12.zip</li>
<li class="l2"><i class="tw rt"></i><svg><use href="#q"/></svg>Ex12_Entin</li>
<li class="l2"><i class="tw rt"></i><svg><use href="#db"/></svg>fabdem_mosaic.vrt</li>
<li><i class="tw rt"></i><svg><use href="#home"/></svg>Домашний каталог</li>
<li><i class="tw rt"></i><svg><use href="#folder"/></svg>C:\ (OS)</li>
<li><i class="tw rt"></i><svg><use href="#folder"/></svg>D:\ (DATA)</li>
<li><i class="tw rt"></i><svg><use href="#folder"/></svg>G:\ (Google Drive)</li>
</ul>
<div class="sb"><i class="up"></i><i class="tr"></i><i class="th"></i><i class="down"></i></div>
</div>
</section>
<div class="split-h"></div>
<section class="dock layers">
<div class="dock-title"><h2>Слои</h2><button aria-label="Открепить"><svg><use href="#float"/></svg></button><button aria-label="Закрыть"><svg><use href="#close"/></svg></button></div>
<div class="dock-bar">
<button title="Стили слоя"><svg><use href="#brush"/></svg></button><button title="Добавить группу"><svg><use href="#group"/></svg></button><button class="sub" title="Темы карты"><svg><use href="#eye"/></svg></button><button class="sub" title="Фильтр"><svg><use href="#funnel"/></svg></button><button class="wide" title="Фильтр по выражению" disabled><svg><use href="#epsf"/></svg></button><button title="Развернуть всё"><svg><use href="#expand"/></svg></button><button title="Свернуть всё"><svg><use href="#collapse"/></svg></button><button title="Удалить слой"><svg><use href="#p-del"/></svg></button>
</div>
<div class="view">
<ul class="tree lay">
<li><i class="tw dn"></i><label><input type="checkbox" checked><svg><use href="#raster"/></svg>fabdem_mosaic</label></li>
<li class="band">Канал 1 (Gray)</li>
<li class="ramp"><i></i><div><span>307,700012</span><span>128,740005</span></div></li>
<li class="sel"><i class="tw rt"></i><label><input type="checkbox" checked><svg><use href="#raster"/></svg><u>N55E036_FABDEM_V1-2</u></label></li>
<li><i class="tw rt"></i><label><input type="checkbox" checked><svg><use href="#raster"/></svg>N55E035_FABDEM_V1-2</label></li>
</ul>
</div>
</section>
</aside>
<div class="split-v"></div>
<section class="canvas" aria-label="Карта">
<svg class="raster" viewBox="0 0 889 445" preserveAspectRatio="none">
<defs>
<linearGradient id="base" x1="0" y1="0" x2="1" y2=".5"><stop offset="0" stop-color="#808080"/><stop offset=".35" stop-color="#848484"/><stop offset=".55" stop-color="#6c6c6c"/><stop offset="1" stop-color="#606060"/></linearGradient>
<radialGradient id="lt"><stop offset="0" stop-color="#fff" stop-opacity=".5"/><stop offset="1" stop-color="#fff" stop-opacity="0"/></radialGradient>
<radialGradient id="dk"><stop offset="0" stop-color="#1c1c1c" stop-opacity=".6"/><stop offset="1" stop-color="#1c1c1c" stop-opacity="0"/></radialGradient>
<filter id="cloud" x="0" y="0" width="100%" height="100%" color-interpolation-filters="sRGB"><feTurbulence type="fractalNoise" baseFrequency=".03 .035" numOctaves="6" seed="11"/><feColorMatrix values="1.500 0 0 0 -.25 1.500 0 0 0 -.25 1.500 0 0 0 -.25 0 0 0 0 1"/></filter>
<filter id="grain" x="0" y="0" width="100%" height="100%" color-interpolation-filters="sRGB"><feTurbulence type="fractalNoise" baseFrequency=".14" numOctaves="3" seed="21"/><feColorMatrix values="1.600 0 0 0 -.3 1.600 0 0 0 -.3 1.600 0 0 0 -.3 0 0 0 0 1"/></filter>
<filter id="veins" x="0" y="0" width="100%" height="100%" color-interpolation-filters="sRGB"><feTurbulence type="turbulence" baseFrequency=".018 .02" numOctaves="3" seed="5"/><feColorMatrix values="0 0 0 0 .15 0 0 0 0 .15 0 0 0 0 .15 -9 0 0 0 1"/></filter>
<filter id="wiggle" x="-5%" y="-5%" width="110%" height="110%"><feTurbulence type="fractalNoise" baseFrequency=".09" numOctaves="3" seed="3"/><feDisplacementMap in="SourceGraphic" scale="11" xChannelSelector="R" yChannelSelector="G"/></filter>
<filter id="soft" x="-5%" y="-5%" width="110%" height="110%"><feGaussianBlur stdDeviation="3"/></filter>
<g id="rivers" transform="translate(-11 -11) scale(.58036 .33333)" fill="none" stroke-linecap="round" stroke-linejoin="round">
<g class="r1"><path d="M1551 390l-35-10-40 16-40 6-40 8-50 8-32 14-8 30"/><path d="M1238 530l2 20"/><path d="M1415 40l10 40 18 40-8 45 35 30 40 25 45 20"/><path d="M1060 1082l30-8 40-4 20 14 40-6 20 16 40 10-10 20 15 16-35 15-25 25v35l30 35 20 40 45 40 60 40"/><path d="M1040 1280l40 30 45 25 55-35 60-10"/><path d="M1245 1290l50 40 45 36"/></g>
<g class="r2"><path d="M1306 460l-26 30-40 30-5 30-35 12-20-12-20-5-50 10-20-15-30 5-15-35-15 15-15-15-15 20-50 5-50 25-30 25-30 30-40 40-40 2"/><path d="M690 205l25 55 45 35 60 25 40 15 20 30 10 35 20 30 30 30 20 25 50 27"/><path d="M1435 165l-35 5-50 8-50 4-30 13-15 55"/><path d="M1270 690l-15 70 35 40 50 40 20 40-5 50 35 70 50 30 50 30 20 40 20 40-20 40-15 20"/><path d="M1551 1222l-56-17-55-10-40-20-40-40-60-20"/><path d="M790 1085l70-2h70l70-1 60 1"/><path d="M935 1080l-15-50-5-40 20-30 10-50-25-30-25-30-45-45-30 10-30 15-50 40-40 15"/><path d="M1065 1070l-15-40v-70l10-30"/><path d="M925 1367l5-107 50-40 30 20 30 40"/><path d="M19 1165l31 40 40 45 15 60v57"/><path d="M545 1367l-35-37v-60l20-30"/><path d="M885 1367l-15-37-50-25-30-45-40-35"/></g>
<g class="r3"><path d="M1400 405l5-35-10-50 5-50"/><path d="M380 100l50 35 40 5 40-15 50-5 20 30-5 45 25 40 50 10 40-10"/><path d="M250 530l50-30 40-35 60-10 30-15 60 10 40 35 40 5 40 40 40 50 30 40 60 30 40 10"/><path d="M470 720l70 0 60-20 60-40 20-40"/><path d="M440 760l50 30 30 50 40 40 20 40 20 80M575 920l45-35 80-25"/><path d="M40 560l20 80 30 50 60 20 45 20"/><path d="M990 540l30 60M1100 430l-80-80-60-100M1040 180l15 80 25 80 20 60M870 330l60 20 80 5"/><path d="M750 1225l-60-20-40-35-50-50-40-35-100-30-90-5"/><path d="M530 1240l-50-25-60-10-50-35M105 1315l55-25 50-60 60-25"/><path d="M760 40l15 30 55 15 50 10 50-4"/><path d="M1010 870l50 60M1190 720l40 60 60 20M1060 720l80 0 50 10"/><path d="M1330 1070l0-60-20-60M1200 1070l20-60M1440 430l8 50M1380 440l5 40M1310 430l-25-40M1490 700l-40-40"/><path d="M19 1085l50-10 10-60 40-80 60-20M30 720l30 70-10 120M200 800l100-10 60 20 80-20"/><path d="M690 520l-60-60-30-60M820 520l10-80M800 760l50 45M1500 1060l10-80M1350 1340l60-80"/><path d="M410 420l20 40M530 485l-10 40-60 30 10 50M230 560l60 60 70 90"/><path d="M1190 90l40 50 10 60M1400 50l-60 30M1440 160l40-40 70 0"/></g>
</g>
</defs>
<rect width="889" height="445" fill="url(#base)"/>
<g transform="translate(-11 -11) scale(.58036 .33333)">
<g fill="url(#lt)"><ellipse cx="400" cy="700" rx="240" ry="200"/><ellipse cx="390" cy="700" rx="90" ry="70"/><ellipse cx="320" cy="570" rx="160" ry="140"/><ellipse cx="340" cy="900" rx="260" ry="200"/><ellipse cx="930" cy="200" rx="170" ry="90"/><ellipse cx="930" cy="190" rx="100" ry="60"/><ellipse cx="1110" cy="60" rx="150" ry="90"/><ellipse cx="1110" cy="50" rx="80" ry="50"/><ellipse cx="890" cy="60" rx="90" ry="60"/><ellipse cx="70" cy="310" rx="110" ry="90"/><ellipse cx="100" cy="430" rx="120" ry="140"/><ellipse cx="260" cy="225" rx="120" ry="70"/><ellipse cx="470" cy="240" rx="90" ry="150"/><ellipse cx="1095" cy="1210" rx="80" ry="140"/><ellipse cx="1125" cy="330" rx="70" ry="200"/><ellipse cx="1120" cy="620" rx="110" ry="140"/><ellipse cx="1145" cy="650" rx="26" ry="360"/><ellipse cx="550" cy="1170" rx="160" ry="110"/><ellipse cx="240" cy="1020" rx="70" ry="60"/><ellipse cx="660" cy="700" rx="90" ry="70"/><ellipse cx="260" cy="1340" rx="130" ry="90"/><ellipse cx="1450" cy="650" rx="160" ry="240"/></g>
<g fill="url(#dk)"><ellipse cx="750" cy="490" rx="160" ry="110"/><ellipse cx="680" cy="400" rx="200" ry="160"/><ellipse cx="890" cy="640" rx="120" ry="90"/><ellipse cx="50" cy="540" rx="110" ry="120"/><ellipse cx="110" cy="720" rx="110" ry="80"/><ellipse cx="1240" cy="650" rx="100" ry="110"/><ellipse cx="1540" cy="330" rx="70" ry="160"/><ellipse cx="1350" cy="1340" rx="340" ry="200"/><ellipse cx="1350" cy="1330" rx="260" ry="160"/><ellipse cx="1500" cy="1250" rx="220" ry="220"/><ellipse cx="960" cy="1340" rx="160" ry="120"/><ellipse cx="1160" cy="190" rx="60" ry="50"/><ellipse cx="640" cy="930" rx="80" ry="60"/><ellipse cx="280" cy="100" rx="220" ry="80"/><ellipse cx="60" cy="1340" rx="120" ry="90"/><ellipse cx="1200" cy="900" rx="180" ry="220"/></g>
</g>
<rect class="cloud" width="889" height="445" filter="url(#cloud)"/>
<rect class="grain" width="889" height="445" filter="url(#grain)"/>
<rect class="veins" width="889" height="445" filter="url(#veins)"/>
<g class="glow" filter="url(#soft)"><use href="#rivers"/></g>
<g filter="url(#wiggle)"><use href="#rivers"/></g>
</svg>
</section>
<div class="split-v r"></div>
<aside class="right dock">
<div class="dock-title"><h2>Инструменты анализа</h2><button aria-label="Открепить"><svg><use href="#float"/></svg></button><button aria-label="Закрыть"><svg><use href="#close"/></svg></button></div>
<div class="dock-bar">
<button class="sub" title="Модели"><svg><use href="#models"/></svg></button><button class="sub" title="Сценарии"><svg><use href="#python"/></svg></button><button title="История"><svg><use href="#clocks"/></svg></button><button title="Результаты"><svg><use href="#doc"/></svg></button><i class="sep"></i><button title="Правка на месте" disabled><svg><use href="#inplace"/></svg></button><i class="sep"></i><button title="Параметры"><svg><use href="#wrench"/></svg></button>
</div>
<div class="search"><svg><use href="#find"/></svg><input type="text" placeholder="Поиск..." aria-label="Поиск"></div>
<div class="view">
<ul class="tree tools">
<li><i class="tw rt"></i><svg><use href="#clocks"/></svg>Недавно использованные</li>
<li><i class="tw rt"></i><svg><use href="#q"/></svg>3D Тайлы</li>
<li><i class="tw rt"></i><svg><use href="#q"/></svg>Анализ растров</li>
<li><i class="tw rt"></i><svg><use href="#q"/></svg>Вектор — Анализ</li>
<li><i class="tw rt"></i><svg><use href="#q"/></svg>Вектор — Выборка</li>
<li><i class="tw rt"></i><svg><use href="#q"/></svg>Вектор — Геометрия</li>
<li><i class="tw rt"></i><svg><use href="#q"/></svg>Вектор — Создание</li>
<li><i class="tw rt"></i><svg><use href="#q"/></svg>Вектор — Таблица атрибутов</li>
<li><i class="tw rt"></i><svg><use href="#q"/></svg>Векторное покрытие</li>
<li><i class="tw rt"></i><svg><use href="#q"/></svg>Векторные тайлы</li>
<li><i class="tw rt"></i><svg><use href="#q"/></svg>Графики и диаграммы</li>
<li><i class="tw rt"></i><svg><use href="#q"/></svg>Инструменты обработки растра</li>
<li><i class="tw rt"></i><svg><use href="#q"/></svg>Инструменты пространственных операций</li>
<li><i class="tw rt"></i><svg><use href="#q"/></svg>Интерполяция</li>
<li><i class="tw rt"></i><svg><use href="#q"/></svg>Картография</li>
<li><i class="tw rt"></i><svg><use href="#q"/></svg>Меш</li>
<li><i class="tw rt"></i><svg><use href="#q"/></svg>Облака точек — извлечение</li>
<li><i class="tw rt"></i><svg><use href="#q"/></svg>Общие инструменты векторных данных</li>
<li><i class="tw rt"></i><svg><use href="#q"/></svg>Преобразование облака точек</li>
<li><i class="tw rt"></i><svg><use href="#q"/></svg>Растр — Анализ рельефа</li>
<li><i class="tw rt"></i><svg><use href="#q"/></svg>Растр — Создание</li>
<li><i class="tw rt"></i><svg><use href="#q"/></svg>Сетевой анализ</li>
<li><i class="tw rt"></i><svg><use href="#q"/></svg>Слои</li>
<li><i class="tw rt"></i><svg><use href="#q"/></svg>Управление данными облака точек</li>
<li><i class="tw rt"></i><svg><use href="#q"/></svg>Файлы</li>
<li><i class="tw rt"></i><svg><use href="#q"/></svg>Database</li>
<li><i class="tw rt"></i><svg><use href="#q"/></svg>GPS</li>
<li><i class="tw rt"></i><svg><use href="#models"/></svg>Модели</li>
<li><i class="tw rt"></i><svg><use href="#carto"/></svg>Cartogram</li>
</ul>
<div class="sb"><i class="up"></i><i class="tr"></i><i class="th"></i><i class="down"></i></div>
</div>
</aside>
</main>

<footer class="status">
<div class="search"><svg><use href="#find"/></svg><input type="text" placeholder="Искать (Ctrl+K)" aria-label="Искать"></div>
<span class="grow"></span>
<label for="coord">Координаты</label><input id="coord" class="coord" type="text" value="56,213°  36,029°">
<button class="sbtn" title="Охват"><svg><use href="#extent"/></svg></button>
<label for="scale" class="scl">Масштаб</label><div class="combo scale"><select id="scale"><option>1:454661</option></select></div>
<button class="sbtn lock" title="Закрепить масштаб"><svg><use href="#lock"/></svg></button>
<label for="zoom">Увеличение</label><div class="spin"><input id="zoom" type="text" value="100%"><i class="ud"></i></div>
<label for="rot" class="rot">Поворот</label><div class="spin"><input id="rot" type="text" value="0,0 °"><i class="ud"></i></div>
<label class="render"><input type="checkbox" checked>Отрисовка</label>
<button class="crs"><svg><use href="#crs"/></svg>EPSG:4326</button>
<button class="sbtn msg" title="Сообщения"><svg><use href="#bubble"/></svg></button>
</footer>
</body>
</html>
```
FILE: styles.css
```css
* { box-sizing: border-box; }
html, body { height: 100%; }
body { margin: 0; display: flex; flex-direction: column; background: #f0f0f0; color: #000; font: 14px/20px "Noto Sans", "Open Sans", sans-serif; overflow: hidden; border-bottom: 1px solid #36426a; }
button, input, select { font: inherit; color: inherit; }
button { border: 0; background: none; padding: 0; margin: 0; }
svg { display: block; flex: none; }
.defs { display: none; }
.grads { position: absolute; width: 0; height: 0; }
h1, h2 { margin: 0; font-size: 14px; font-weight: 400; }
ul { list-style: none; margin: 0; padding: 0; }

.title { flex: none; height: 29px; background: #eff3fb; display: flex; align-items: center; padding: 0 3px 0 2px; gap: 6px; }
.i20 { width: 20px; height: 20px; }
.winbtns { margin-left: auto; display: flex; }
.winbtns button { width: 58px; height: 29px; display: grid; place-items: center; }
.winbtns svg { width: 14px; height: 14px; }

.menu-bar { flex: none; height: 26px; display: flex; padding: 0 4px; border-bottom: 2px solid #d8d8d8; }
.menu-bar button { padding: 0 9px; height: 25px; }
.menu-bar button:nth-child(even) { padding-right: 10px; }
.menu-bar u { text-underline-offset: 2px; }

.bar { flex: none; height: 49px; display: flex; align-items: center; background: linear-gradient(#fafafa, #efefef); border-bottom: 2px solid #bcbcbc; }
.bar.last { height: 46px; padding-top: 2px; }
.grip { flex: none; width: 21px; height: 26px; background: repeating-linear-gradient(#b8b8b8 0 2px, transparent 2px 4px) 12px 2px / 4px 22px no-repeat; }
.grip::after { content: ""; display: block; width: 1px; height: 26px; margin-left: 13px; background: #f5f5f5; }
.bar > .grip:first-child { margin-left: -5px; }
.tb { flex: none; position: relative; width: 39px; height: 38px; margin: 0 1px; display: flex; align-items: center; padding-left: 5px; border: 1px solid transparent; border-radius: 3px; }
.tb:nth-of-type(5n) { margin-right: 2px; }
.tb svg { width: 28px; height: 28px; overflow: visible; }
.tb.on { background: #d9d9d9; border-color: #a8a8a8; }
.tb:disabled svg, .dock-bar button:disabled svg { opacity: .36; filter: grayscale(.6); }
.more { width: 54px; }
.more::after, .sub::after, .wide::after { content: ""; position: absolute; right: 3px; top: 17px; border: 5px solid transparent; border-top-color: #505050; border-bottom: 0; }
.sub::after { right: 1px; top: 29px; border-width: 4px; border-bottom: 0; }
.tb:disabled::after, .wide:disabled::after { opacity: .6; }
.sep { flex: none; width: 1px; height: 24px; background: #cfcfcf; margin: 0 3px; }
.last .sep { margin: 0 4px; }
.ext { width: 20px; display: grid; place-items: center; margin-left: 7px; }
.ext svg { width: 12px; height: 12px; }

.spin, .combo, .search, .coord { background: #fff; border: 1px solid #a9a9a9; border-radius: 3px; height: 26px; display: flex; align-items: center; }
.spin { position: relative; width: 101px; flex: none; }
.spin input { width: 100%; border: 0; background: none; padding: 0 24px 0 5px; outline: 0; }
.ud { position: absolute; right: 0; top: 0; width: 19px; height: 24px; border-left: 1px solid #bbb; background: #f6f6f6; border-radius: 0 3px 3px 0; }
.ud::before, .ud::after { content: ""; position: absolute; left: 4px; border: 5px solid transparent; }
.ud::before { top: 5px; border-top: 0; border-bottom-color: #555; }
.ud::after { bottom: 5px; border-bottom: 0; border-top-color: #555; }
.combo { position: relative; width: 118px; flex: none; margin: 0 2px; }
.combo select { width: 100%; height: 24px; appearance: none; border: 0; background: none; padding: 0 5px; outline: 0; }
.combo::after { content: ""; position: absolute; right: 10px; top: 10px; border: 5px solid transparent; border-top-color: #555; border-bottom: 0; pointer-events: none; }
.off { background: #f2f2f2; color: #777; font-size: 13px; }
.off.combo { border-color: #c6c6c6; }
.off .ud, .off.combo::after { opacity: .7; }
.off input, .off select { color: #777; opacity: 1; }

.work { flex: 1; min-height: 0; display: flex; }
.left { width: 451px; flex: none; display: flex; flex-direction: column; }
.dock { display: flex; flex-direction: column; min-height: 0; }
.browser { flex: none; height: 367px; }
.layers { flex: 1; }
.dock-title { flex: none; height: 27px; display: flex; align-items: center; gap: 4px; padding: 2px 2px 0 5px; }
.dock-title h2 { flex: 1; }
.dock-title svg { width: 14px; height: 14px; }
.dock-bar { flex: none; height: 38px; display: flex; align-items: center; padding: 0 0 4px 4px; }
.dock-bar button { position: relative; width: 31px; display: grid; place-items: center; }
.dock-bar svg { width: 20px; height: 20px; overflow: visible; }
.dock-bar .sub::after { right: 0; top: 14px; border-width: 4px 4px 0; }
.dock-bar .wide { width: 46px; justify-content: start; padding-left: 6px; }
.dock-bar .wide::after { top: 8px; right: 1px; }
.view { flex: 1; min-height: 0; display: flex; background: #fff; border: 1px solid #a9a9a9; overflow: hidden; }
.tree { flex: 1; min-width: 0; overflow: hidden; white-space: nowrap; padding-top: 1px; }
.tree li { height: 22px; display: flex; align-items: center; }
.tree li:nth-child(even) { height: 23px; }
.tree li > svg { width: 19px; height: 19px; margin: 0 9px 0 4px; }
.tw { flex: none; width: 20px; height: 22px; display: grid; place-items: center; }
.dn::before { content: ""; border: 5px solid transparent; border-top-color: #555; border-bottom: 0; }
.rt::before { content: ""; border: 5px solid transparent; border-left-color: #555; border-right: 0; }
.l2 { padding-left: 20px; }
.hl { width: 268px; background: #efefef; }
.tools { padding-left: 1px; }
.tree.tools li > svg { margin: 0 8px; }

.sb { flex: none; width: 17px; display: flex; flex-direction: column; border-left: 1px solid #ddd; background: #f8f8f8; }
.up, .down { height: 17px; display: grid; place-items: center; }
.up { border-bottom: 1px solid #bbb; }
.down { border-top: 1px solid #bbb; }
.up::before { content: ""; border: 5px solid transparent; border-bottom-color: #444; border-top: 0; }
.down::before { content: ""; border: 5px solid transparent; border-top-color: #444; border-bottom: 0; }
.tr { flex: 41; }
.th { flex: 59; background: #e3e3e3; border-top: 2px solid #bbb; }
.tools + .sb .tr { flex: 74; }
.tools + .sb .th { flex: 26; }
.split-h { flex: none; height: 6px; background: repeating-linear-gradient(90deg, #bbb 0 2px, transparent 2px 4px) center / 20px 2px no-repeat; }
.split-v { flex: none; width: 8px; background: repeating-linear-gradient(#bbb 0 2px, transparent 2px 4px) center / 2px 20px no-repeat; }

.lay { font-weight: 700; font-size: 15px; }
.tree.lay li { height: 23px; }
.lay label { display: flex; align-items: center; }
.lay svg { width: 17px; height: 17px; margin: 0 9px 0 10px; }
.lay .tw { width: 24px; margin-right: 5px; }
input[type="checkbox"] { appearance: none; flex: none; width: 17px; height: 17px; margin: 0; border: 1px solid #aaa; background: #fff; display: grid; place-items: center; }
input[type="checkbox"]:checked::before { content: ""; width: 11px; height: 12px; background: #000; clip-path: polygon(0 50%, 18% 42%, 38% 68%, 82% 0, 100% 6%, 42% 100%, 30% 100%); }
.tree.lay .band { height: 20px; padding-left: 54px; font-weight: 400; font-size: 14px; }
.tree.lay .ramp { height: 151px; padding-left: 54px; align-items: stretch; font-weight: 400; }
.ramp i { width: 25px; background: linear-gradient(#fff, #000); margin-bottom: 1px; }
.ramp div { display: flex; flex-direction: column; justify-content: space-between; padding: 2px 0 0 6px; font: 11px/16px "DejaVu Sans", sans-serif; }
.lay .sel { background: #1380dc; color: #fff; }
.sel .rt::before { border-left-color: #0b3b66; }
.sel u { text-underline-offset: 3px; }

.canvas { flex: 1; min-width: 0; margin-top: 2px; background: #fff; border: 1px solid #b4b4b4; display: grid; align-content: center; padding: 1px 21px 0; }
.raster { width: 100%; height: auto; aspect-ratio: 889 / 445; }
.cloud { mix-blend-mode: overlay; opacity: .28; }
.grain { mix-blend-mode: overlay; opacity: .32; }
.veins { opacity: .35; }
.glow { opacity: .6; }
.r1, .r2, .r3 { stroke: #101010; stroke-width: 5px; }
.r1 path, .r2 path, .r3 path { vector-effect: non-scaling-stroke; }
.r2 { stroke: #262626; stroke-width: 3px; }
.r3 { stroke: #3c3c3c; stroke-width: 2px; stroke-opacity: .7; }

.right { flex: none; width: 520px; }
.right .sep { background: #fff; width: 2px; margin: 0 4px; height: 14px; }
.right .search { flex: none; height: 28px; }
.search svg { width: 17px; height: 17px; margin-left: 10px; }
.search input { flex: 1; min-width: 0; border: 0; background: none; outline: 0; padding: 0 8px; font-size: 13px; }
.search input::placeholder { color: #777; opacity: 1; }

.status { flex: none; height: 35px; display: flex; align-items: center; padding: 0 3px 0 5px; font-size: 13px; }
.status .search { width: 250px; height: 27px; }
.grow { flex: 1; }
.coord { width: 124px; margin-left: 5px; padding: 0 8px; }
.sbtn { width: 32px; display: grid; place-items: center; }
.sbtn svg { width: 20px; height: 20px; }
.scl { margin-left: 8px; }
.status .scale { width: 96px; margin: 0 4px 0 1px; }
.scale::before { content: ""; position: absolute; right: 0; top: 0; width: 26px; height: 24px; background: #f0f0f0; border-left: 1px solid #bbb; }
.lock { width: 38px; }
.lock svg { width: 16px; }
.status .spin { margin-left: 4px; }
.rot { margin-left: 12px; }
.status .rot + .spin { margin-left: 12px; }
.render { display: flex; align-items: center; gap: 6px; margin-left: 8px; }
.crs { display: flex; align-items: center; gap: 2px; margin-left: 17px; }
.crs svg { width: 20px; height: 20px; }
.msg { margin-left: 28px; }
```
